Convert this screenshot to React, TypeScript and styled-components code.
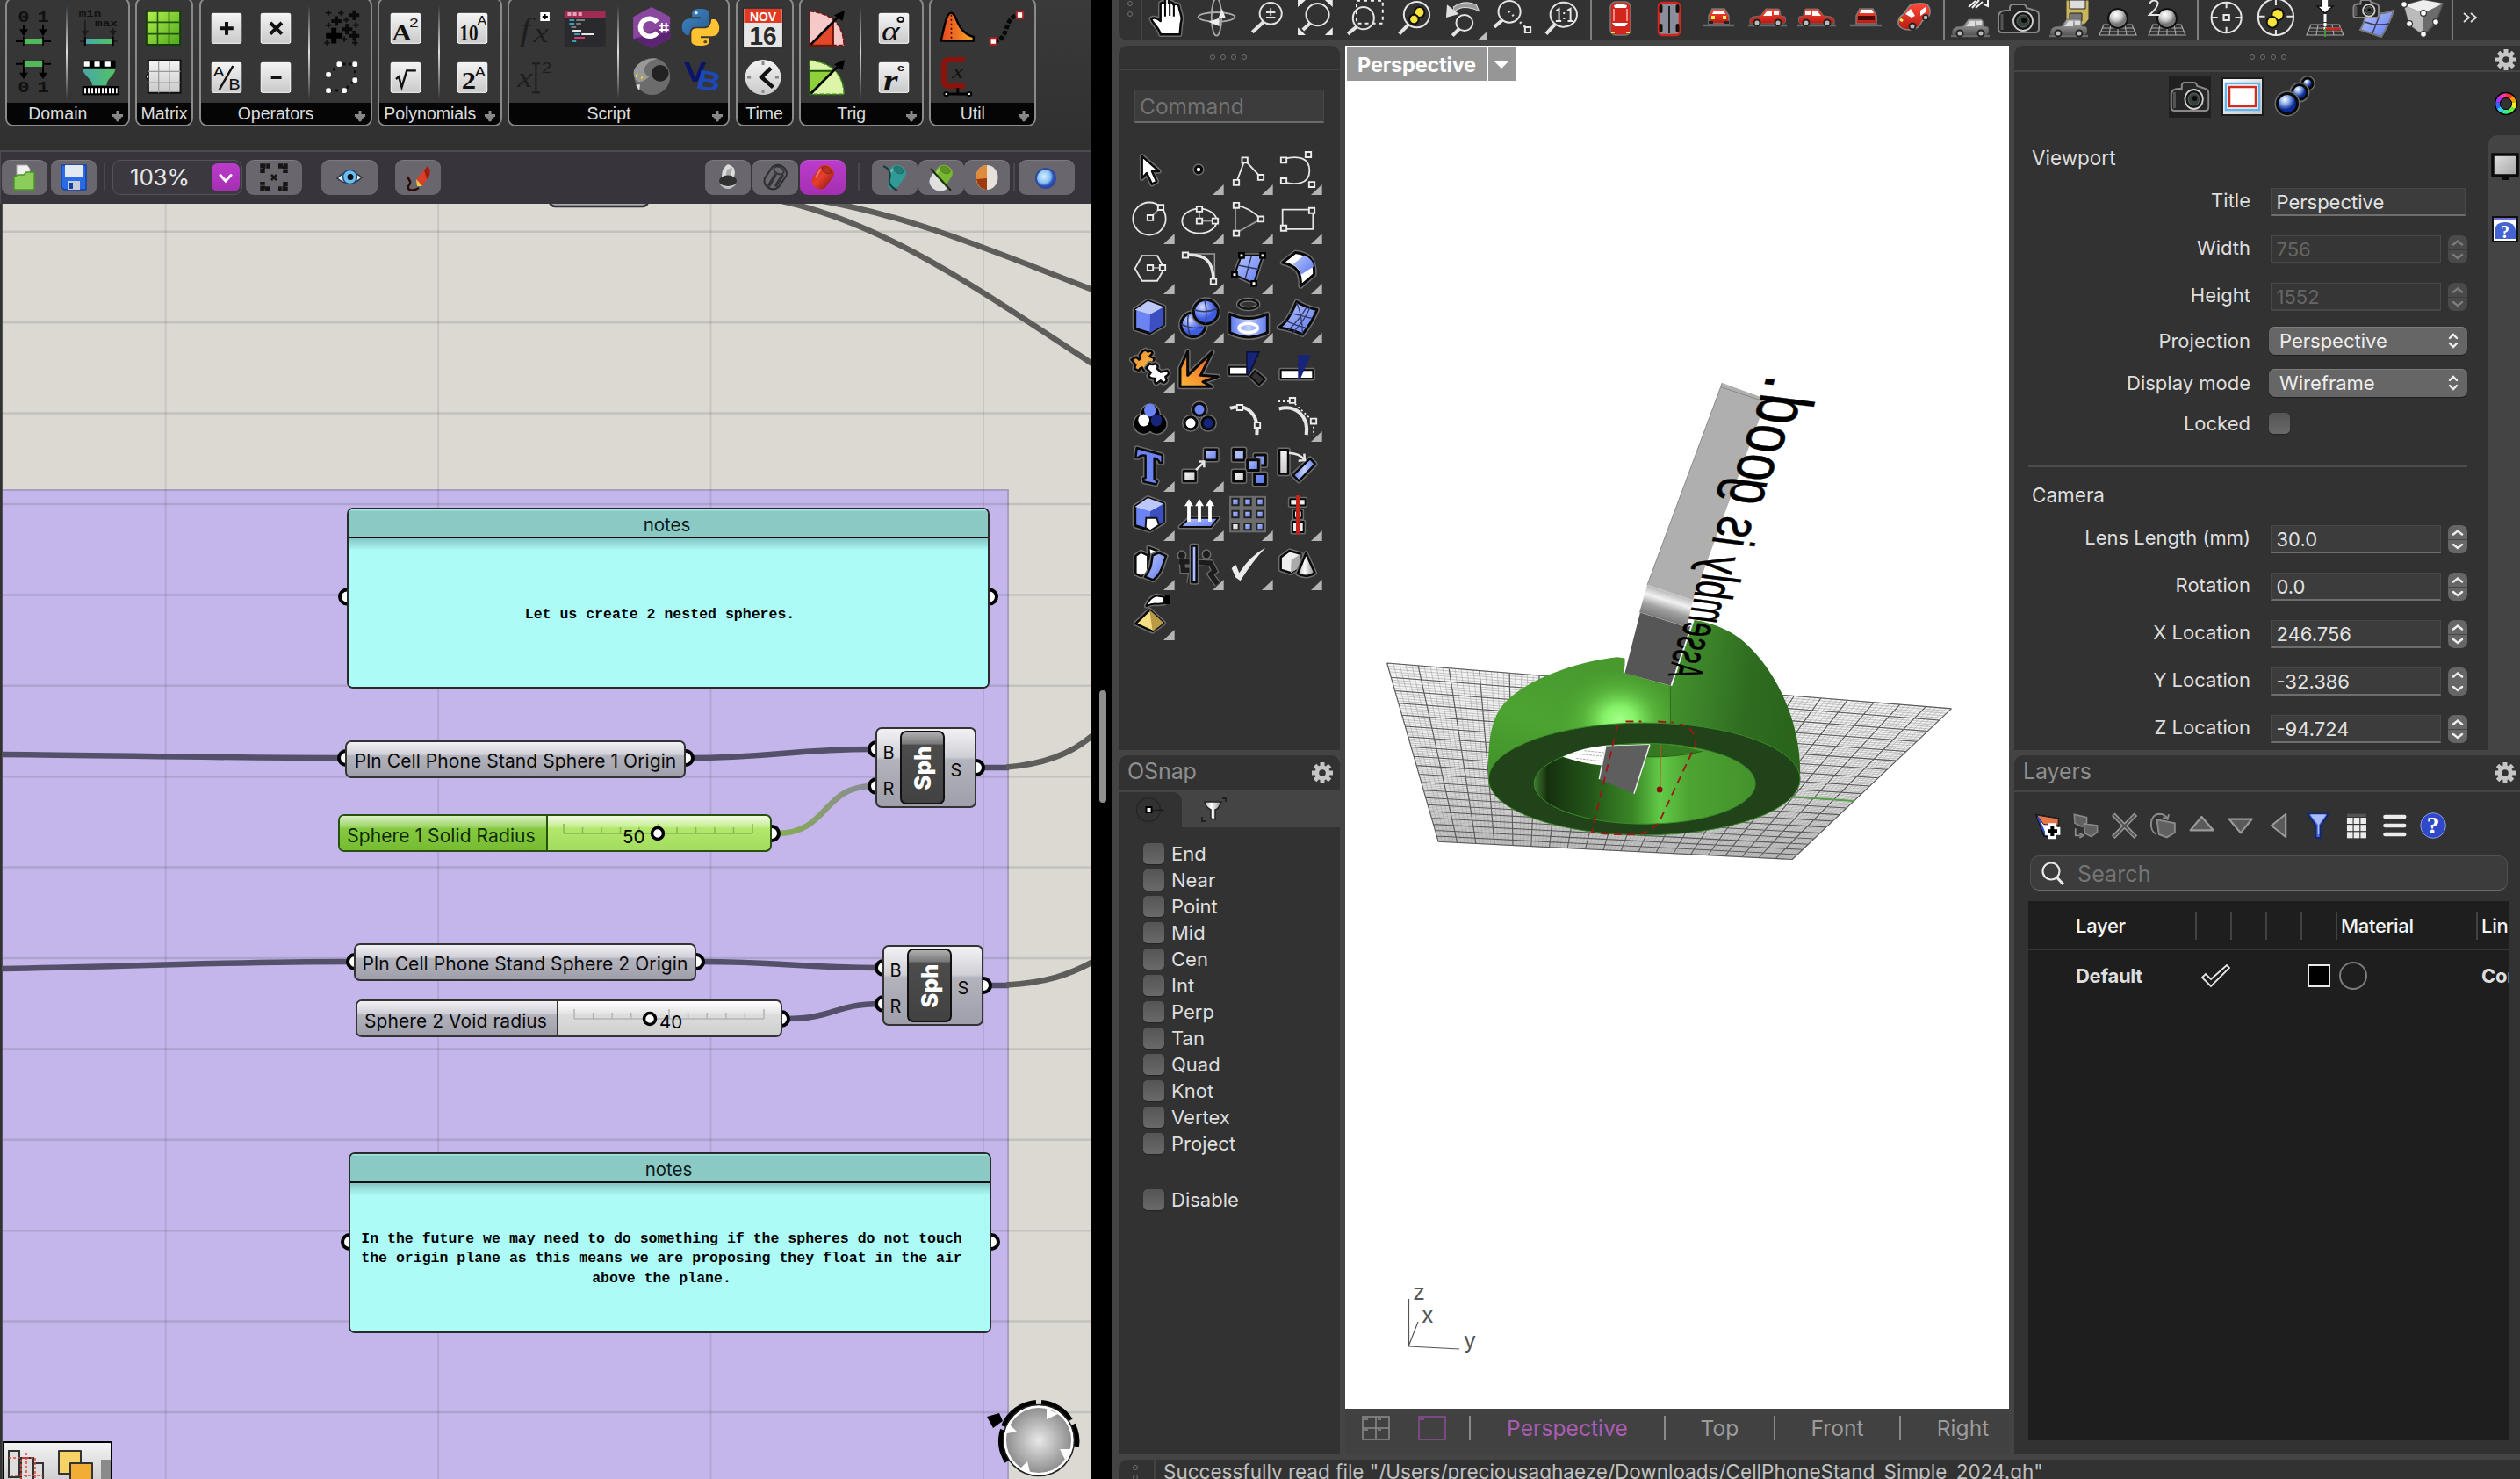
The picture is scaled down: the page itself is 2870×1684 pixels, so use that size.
import React from 'react';
import styled, { createGlobalStyle, css } from 'styled-components';

const ui = `Inter, "Liberation Sans", sans-serif`;
const arial = `"Liberation Sans", Arial, sans-serif`;

const Global = createGlobalStyle`
  * { box-sizing: border-box; }
  body { margin: 0; background: #000; overflow: hidden; font-family: ${ui}; }
  svg * { vector-effect: non-scaling-stroke; }
`;

const Screen = styled.div`
  width: 2870px; height: 1684px; display: flex; background: #000; overflow: hidden;
`;

/* ---------- shared drawing helpers ---------- */
const ArtSvg = styled.svg`display: block; width: 100%; height: 100%; overflow: hidden;`;
const Art = ({ box, children }: { box: string; children?: React.ReactNode }) => (
  <ArtSvg viewBox={box} preserveAspectRatio="none">{children}</ArtSvg>
);

const Out = ({ d, f, w = 3 }: { d: string; f: string; w?: number }) => (
  <g strokeLinejoin="round">
    <path d={d} fill="none" stroke="#6c6c6c" strokeWidth={w + 3} />
    <path d={d} fill={f} stroke="#0a0a0a" strokeWidth={w} />
  </g>
);
const Ring = ({ x, y, rx, ry, f }: { x: number; y: number; rx: number; ry: number; f: string }) => (
  <g>
    <ellipse cx={x} cy={y} rx={rx} ry={ry} fill="none" stroke="#6c6c6c" strokeWidth={6} />
    <ellipse cx={x} cy={y} rx={rx} ry={ry} fill={f} stroke="#0a0a0a" strokeWidth={3} />
  </g>
);
const Ln = ({ d, c = '#e6e6e6', w = 1.8, dash }: { d: string; c?: string; w?: number; dash?: string }) => (
  <path d={d} fill="none" stroke={c} strokeWidth={w} strokeDasharray={dash} />
);
const Pts = ({ p }: { p: number[][] }) => (
  <>{p.map(([x, y], i) => <rect key={i} x={x - 9.5} y={y - 8} width={19} height={16} fill="#323232" stroke="#ececec" strokeWidth={1.9} />)}</>
);
const Solid = ({ p }: { p: number[][] }) => (
  <>{p.map(([x, y], i) => <rect key={i} x={x - 8} y={y - 7} width={16} height={14} fill="#fff" stroke="#000" strokeWidth={2.4} />)}</>
);

const Defs = () => (
  <svg width="0" height="0" style={{ display: 'block', position: 'absolute' }}>
    <defs>
      <linearGradient id="blue" x1="0" y1="0" x2="1" y2="1"><stop offset="0" stopColor="#bcc8fa" /><stop offset="1" stopColor="#5b78f0" /></linearGradient>
      <linearGradient id="blueH"><stop offset="0" stopColor="#5b78f0" /><stop offset=".5" stopColor="#c3cffb" /><stop offset="1" stopColor="#5b78f0" /></linearGradient>
      <radialGradient id="ball" cx=".35" cy=".3"><stop offset="0" stopColor="#d9e0ff" /><stop offset=".5" stopColor="#8097f5" /><stop offset="1" stopColor="#3f5ce0" /></radialGradient>
      <radialGradient id="navy" cx=".38" cy=".3"><stop offset="0" stopColor="#fff" /><stop offset=".45" stopColor="#8fb2ea" /><stop offset="1" stopColor="#0c2a96" /></radialGradient>
      <radialGradient id="pearl" cx=".4" cy=".3"><stop offset="0" stopColor="#fff" /><stop offset=".6" stopColor="#ccc" /><stop offset="1" stopColor="#777" /></radialGradient>
      <linearGradient id="gray" x1="0" y1="0" x2="1" y2="1"><stop offset="0" stopColor="#fff" /><stop offset="1" stopColor="#c4c4c4" /></linearGradient>
      <linearGradient id="grayV" x1="0" y1="0" x2="0" y2="1"><stop offset="0" stopColor="#f4f4f4" /><stop offset="1" stopColor="#c9c9c9" /></linearGradient>
      <linearGradient id="lcd" x1="0" y1="0" x2="1" y2="1"><stop offset="0" stopColor="#e2e2e2" /><stop offset="1" stopColor="#a4a4a4" /></linearGradient>
      <linearGradient id="cone"><stop offset="0" stopColor="#aaa" /><stop offset=".4" stopColor="#fff" /><stop offset="1" stopColor="#8a8a8a" /></linearGradient>
      <linearGradient id="fire" x1="0" y1="1" x2="1" y2="0"><stop offset="0" stopColor="#f9b93a" /><stop offset="1" stopColor="#ef4f24" /></linearGradient>
      <linearGradient id="orange" x1="0" y1="0" x2="1" y2="1"><stop offset="0" stopColor="#ef8d2b" /><stop offset="1" stopColor="#f6bb4a" /></linearGradient>
      <linearGradient id="lime" x1="0" y1="0" x2="1" y2="1"><stop offset="0" stopColor="#b4f04c" /><stop offset="1" stopColor="#4fa81c" /></linearGradient>
      <linearGradient id="teal"><stop offset="0" stopColor="#46a8a8" /><stop offset="1" stopColor="#52c264" /></linearGradient>
      <linearGradient id="red" x1="0" y1="0" x2="1" y2="1"><stop offset="0" stopColor="#c01c14" /><stop offset=".45" stopColor="#e8402e" /><stop offset="1" stopColor="#7c0e08" /></linearGradient>
      <linearGradient id="redcar" x1="0" y1="0" x2="0" y2="1"><stop offset="0" stopColor="#ff4a38" /><stop offset="1" stopColor="#b81a12" /></linearGradient>
      <linearGradient id="graycar" x1="0" y1="0" x2="0" y2="1"><stop offset="0" stopColor="#b4b4b4" /><stop offset="1" stopColor="#5a5a5a" /></linearGradient>
      <linearGradient id="hump"><stop offset="0" stopColor="#e5431e" /><stop offset="1" stopColor="#f7a928" /></linearGradient>
      <linearGradient id="py1" x1="0" y1="0" x2="1" y2="1"><stop offset="0" stopColor="#3d86c6" /><stop offset="1" stopColor="#2a5c90" /></linearGradient>
      <linearGradient id="wire"><stop offset="0" stopColor="#86ad50" /><stop offset="1" stopColor="#8a8a9a" /></linearGradient>
      <linearGradient id="domeR" x1="0" y1="0" x2="1" y2="0.15"><stop offset="0" stopColor="#44942e" /><stop offset=".35" stopColor="#3a8028" /><stop offset=".65" stopColor="#2f6c20" /><stop offset="1" stopColor="#2a651b" /></linearGradient>
      <linearGradient id="domeL" x1="0" y1="1" x2=".5" y2="0"><stop offset="0" stopColor="#3f8f29" /><stop offset=".5" stopColor="#4da331" /><stop offset="1" stopColor="#48992e" /></linearGradient>
      <radialGradient id="glow" gradientUnits="userSpaceOnUse" cx="645" cy="1060" r="150"><stop offset="0" stopColor="#a4ff88" /><stop offset=".25" stopColor="#86f268" /><stop offset=".6" stopColor="#5fbf42" stopOpacity=".6" /><stop offset="1" stopColor="#4da331" stopOpacity="0" /></radialGradient>
      <linearGradient id="hole"><stop offset="0" stopColor="#3f7a30" /><stop offset=".06" stopColor="#16300f" /><stop offset=".25" stopColor="#235518" /><stop offset=".45" stopColor="#3b8827" /><stop offset=".57" stopColor="#62cb48" /><stop offset=".7" stopColor="#4da331" /><stop offset="1" stopColor="#43922c" /></linearGradient>
      <linearGradient id="bend" gradientUnits="userSpaceOnUse" x1="775" y1="690" x2="742" y2="780"><stop offset="0" stopColor="#a8a8a8" /><stop offset=".32" stopColor="#f2f2f2" /><stop offset=".6" stopColor="#a0a0a0" /><stop offset="1" stopColor="#6c6c6c" /></linearGradient>
      <linearGradient id="plane" x1="0" y1="0" x2="0" y2="1"><stop offset="0" stopColor="#f4f4f4" /><stop offset=".6" stopColor="#eee" /><stop offset="1" stopColor="#cfcfcf" /></linearGradient>
      <radialGradient id="dial"><stop offset="0" stopColor="#e8e8e8" /><stop offset="1" stopColor="#8c8c8c" /></radialGradient>
      <radialGradient id="sky" cx=".4" cy=".4"><stop offset="0" stopColor="#d4efff" /><stop offset=".7" stopColor="#86c0f4" /><stop offset="1" stopColor="#2b4fb4" /></radialGradient>
    </defs>
  </svg>
);

/* ---------- Grasshopper window ---------- */
const GhWindow = styled.div`
  width: 1243px; height: 1684px; display: flex; flex-direction: column; background: #323232; flex: none;
  border-right: 1px solid #5a5a5a;
`;
const Ribbon = styled.div`
  height: 171px; flex: none; display: flex; gap: 6.5px; padding-left: 6px; align-items: flex-start;
  background: linear-gradient(#3a3a3a, #303030);
`;
const Group = styled.div<{ $w: number }>`
  width: ${p => p.$w}px; height: 147px; margin-top: -3px; border: 2px solid #8a8a8a; border-radius: 9px;
  display: flex; flex-direction: column; overflow: hidden; background: #363636; flex: none;
`;
const GroupBody = styled.div`flex: 1; display: flex; padding: 5px 0 0 1.5px;`;
const IconCol = styled.div`width: 56px; display: flex; flex-direction: column; flex: none;`;
const RibbonCell = styled.div`width: 56px; height: 56px; flex: none;`;
const GroupSplit = styled.div`
  width: 2px; margin: 2px 9px 4px; flex: none;
  background: linear-gradient(#ddd0, #ddd 50%, #ddd0);
`;
const GroupLabel = styled.div`
  height: 25px; background: #050505; color: #dcdcdc; font: 19.5px ${arial};
  display: flex; align-items: center; flex: none;
`;
const GroupName = styled.span`flex: 1; text-align: center; line-height: 25px;`;
const GroupArrow = styled.span`width: 22px; height: 22px; flex: none;`;

const cell = (cx: number, row: number) => `${cx - 68.6} ${12 + 168 * row} 137.2 168`;
const Key = ({ x, y }: { x: number; y: number }) => (
  <rect x={x - 41} y={y - 51} width={82} height={102} rx={4} fill="url(#grayV)" stroke="#fff" strokeWidth={1} />
);
const T = ({ x, y, s, c = '#111', f = 'Liberation Sans', w, st, children }: any) => (
  <text x={x} y={y} fontSize={s} fill={c} fontFamily={`${f}, sans-serif`} fontWeight={w} fontStyle={st} textAnchor="middle">{children}</text>
);

const domain = [
  [[<Art key="a" box={cell(93, 0)}>
    <T x={66} y={76} s={54} w={700} f="Liberation Mono">0</T><T x={120} y={76} s={54} w={700} f="Liberation Mono">1</T>
    <path d="M66 84V120M120 84V120M44 141H142M66 125V155M120 125V155" stroke="#000" strokeWidth={2} />
    <path d="M54 100H78L66 124ZM108 100H132L120 124Z" /><rect x={68} y={132} width={50} height={18} fill="#52b85c" />
  </Art>, <Art key="b" box={cell(93, 1)}>
    <T x={66} y={316} s={54} w={700} f="Liberation Mono">0</T><T x={120} y={316} s={54} w={700} f="Liberation Mono">1</T>
    <path d="M66 205V262M120 205V262M44 218H142" stroke="#000" strokeWidth={2} />
    <path d="M54 248H78L66 270ZM108 248H132L120 270Z" /><rect x={68} y={210} width={50} height={18} fill="#52b85c" />
  </Art>]],
  [[<Art key="a" box={cell(280, 0)}>
    <T x={252} y={57} s={35} w={700} f="Liberation Mono">min</T><T x={297} y={89} s={35} w={700} f="Liberation Mono">max</T>
    <path d="M238 70V125M316 96V125M224 141H328" stroke="#1a1a1a" strokeWidth={1.6} /><path d="M228 104H248L238 124ZM306 104H326L316 124Z" fill="#1a1a1a" />
    <rect x={240} y={132} width={74} height={18} fill="url(#teal)" /><path d="M238 126V156M316 126V156" stroke="#000" strokeWidth={2} />
  </Art>, <Art key="b" box={cell(280, 1)}>
    <rect x={231} y={206} width={92} height={26} /><path d="M235 211H250V227H235ZM264 211H279V227H264ZM294 211H309V227H294Z" fill="#fff" />
    <path d="M231 236H323C318 262 298 268 298 292H258C258 268 236 262 231 236Z" fill="url(#teal)" />
    <rect x={230} y={294} width={104} height={31} /><path d="M236 309.500H328" stroke="#fff" strokeWidth={6} strokeDasharray="2 2" />
  </Art>]],
];
const matrix = [[[<Art key="a" box={cell(456, 0)}>
  <rect x={409} y={38} width={94} height={115} fill="url(#lime)" stroke="#143c08" strokeWidth={2} />
  <path d="M440 38V153M472 38V153M409 76H503M409 116H503" stroke="#1e5410" strokeWidth={1.6} />
</Art>, <Art key="b" box={cell(456, 1)}>
  <rect x={414} y={206} width={90} height={111} fill="url(#grayV)" stroke="#111" strokeWidth={2} />
  <path d="M443 206V317M473 206V317M414 244H504M414 282H504" stroke="#999" strokeWidth={1.2} /><path d="M413 252Q402 262 413 272" fill="#fff" stroke="#111" strokeWidth={1.5} />
</Art>]]];
const P = (x: number, y: number, r: number) => `M${x - r} ${y}H${x + r}M${x} ${y - r * 1.2}V${y + r * 1.2}`;
const operators = [
  [[<Art key="a" box={cell(632, 0)}><Key x={632} y={97} /><path d="M613 97H651M632 75V119" stroke="#111" strokeWidth={4} /></Art>,
    <Art key="b" box={cell(632, 1)}><Key x={632} y={265} /><T x={610} y={262} s={50} f="Liberation Mono">A</T><T x={654} y={306} s={54} f="Liberation Mono">B</T><path d="M650 225L612 306" stroke="#111" strokeWidth={2.5} /></Art>],
  [<Art key="a" box={cell(768, 0)}><Key x={768} y={97} /><path d="M753 78L785 116M785 78L753 116" stroke="#111" strokeWidth={4} /></Art>,
    <Art key="b" box={cell(768, 1)}><Key x={768} y={265} /><path d="M755 264H784" stroke="#111" strokeWidth={4} /></Art>]],
  [[<Art key="a" box={cell(957, 0)}><path d={P(933, 122, 22)} stroke="#000" strokeWidth={6} /><path d={P(990, 52, 14) + P(940, 72, 14) + P(970, 100, 15) + P(990, 122, 14)} stroke="#0a0a0a" strokeWidth={4} /><path d={P(918, 44, 8) + P(953, 44, 8) + P(968, 68, 8) + P(995, 86, 8) + P(918, 86, 8) + P(914, 146, 8) + P(962, 134, 8) + P(992, 146, 8)} stroke="#111" strokeWidth={2} /></Art>,
    <Art key="b" box={cell(957, 1)}><Ln d="M918 254L948 219H992V273L962 309H918" c="#0c0c0c" w={3} dash="3 4" />{[[948, 219], [992, 219], [918, 254], [992, 273], [962, 309], [918, 309]].map(([x, y]) => <rect key={x + y * 2} x={x - 7} y={y - 8} width={14} height={17} rx={5} fill="#fff" />)}</Art>]],
];
const poly = [
  [[<Art key="a" box={cell(1131, 0)}><Key x={1131} y={97} /><T x={1120} y={138} s={76} w={700} f="Liberation Serif">A</T><T x={1154} y={92} s={46} f="Liberation Mono">2</T></Art>,
    <Art key="b" box={cell(1131, 1)}><Key x={1131} y={265} /><Ln d="M1104 270L1112 262L1120 298L1134 241H1160" c="#111" w={2.4} /></Art>]],
  [[<Art key="a" box={cell(1318, 0)}><Key x={1318} y={97} /><T x={1308} y={137} s={74} w={700} f="Liberation Serif"><tspan textLength={52} lengthAdjust="spacingAndGlyphs">10</tspan></T><T x={1345} y={84} s={42} f="Liberation Mono">A</T></Art>,
    <Art key="b" box={cell(1318, 1)}><Key x={1318} y={265} /><T x={1308} y={304} s={80} w={700} f="Liberation Serif">2</T><T x={1340} y={260} s={48} f="Liberation Mono">A</T></Art>]],
];
const script = [
  [[<Art key="a" box={cell(1500, 0)}><T x={1472} y={134} s={110} c="#1e1e1e" st="italic" f="Liberation Serif">f</T><T x={1515} y={145} s={95} c="#1e1e1e" st="italic" f="Liberation Serif">x</T><rect x={1513} y={42} width={26} height={30} fill="#fff" /><path d="M1519 57H1534M1526 48V66" stroke="#000" strokeWidth={2} /></Art>,
    <Art key="b" box={cell(1500, 1)}><T x={1470} y={296} s={95} c="#1e1e1e" st="italic" f="Liberation Serif">x</T><Ln d="M1490 217H1512M1501 217V316M1490 316H1512" c="#1e1e1e" w={2} /><T x={1531} y={250} s={50} c="#1e1e1e">2</T></Art>],
  [<Art key="a" box={cell(112, 0)}><rect x={55} y={36} width={115} height={124} rx={6} fill="#2a2a2e" /><path d="M55 60V42Q55 36 62 36H162Q170 36 170 42V60Z" fill="#a02c54" /><path d="M64 42H74V54H64ZM79 42H89V54H79ZM94 42H104V54H94Z" fill="#e3a0b8" />
    <path d="M69 69H83M69 81H83M83 117H97M78 141H88" stroke="#38a0b4" strokeWidth={2} /><path d="M88 69H112M88 81H102M74 93H88" stroke="#7a7a7a" strokeWidth={2} /><path d="M78 105H102M103 117H137" stroke="#e8e8e8" strokeWidth={2} /><path d="M83 129H112" stroke="#d43c6c" strokeWidth={2} /></Art>]],
  [[<Art key="a" box={cell(296, 0)}><path d="M296 24L348 58V132L296 165L245 132V58Z" fill="#7b3a8e" /><path d="M245 132L348 110V132L296 165Z" fill="#5a2472" /><path d="M245 132V58L296 24L348 58V80Z" fill="#9350a8" opacity=".6" /><path d="M312 112A26 30 0 1 1 312 76" fill="none" stroke="#fff" strokeWidth={5.5} /><path d="M317 88H344M317 102H344M325 78V112M337 78V112" stroke="#fff" strokeWidth={2} /></Art>,
    <Art key="b" box={cell(296, 1)}><ellipse cx={298} cy={261} rx={50} ry={63} fill="#6c6c6c" /><ellipse cx={320} cy={250} rx={24} ry={28} fill="#222" /><path d="M246 250C248 215 285 198 312 200C270 215 268 250 290 262C270 285 250 290 246 250Z" fill="#999" /><path d="M250 258l8 -10l-2 22zM266 264l8 -4l-6 12z" fill="#f5d91f" /><path d="M252 290L262 310L264 288Z" fill="#ddd" /></Art>],
  [<Art key="a" box={cell(434, 0)}><path d="M410 55V42Q412 30 432 30Q458 30 458 46V76Q458 92 442 92H418Q404 92 402 120H394Q382 110 382 92Q382 66 402 64H434V58H410Z" fill="url(#py1)" /><path d="M458 132V144Q456 156 434 156Q408 156 408 142V112Q408 97 424 97H448Q462 95 464 66H474Q486 76 486 96Q486 122 466 124H434V130H458Z" fill="#ffc331" /><circle cx={421} cy={44} r={5} fill="#dfeeff" /><circle cx={447} cy={143} r={5} fill="#5a4a20" /></Art>,
    <Art key="b" box={cell(434, 1)}><T x={418} y={280} s={94} w={700} c="#0b1566">V</T><g transform="rotate(10 458 280)"><T x={456} y={308} s={92} w={700} c="#1c48b8">B</T></g></Art>]],
];
const time = [[[<Art key="a" box={cell(612, 0)}><rect x={557} y={28} width={110} height={136} fill="#e6e6e6" stroke="#222" strokeWidth={1} /><rect x={559} y={30} width={106} height={48} fill="#e23a22" /><T x={612} y={71} s={46} c="#fff" w={700}><tspan textLength={74} lengthAdjust="spacingAndGlyphs">NOV</tspan></T><T x={612} y={152} s={86} w={700} c="#2a2a2a"><tspan textLength={76} lengthAdjust="spacingAndGlyphs">16</tspan></T></Art>,
  <Art key="b" box={cell(612, 1)}><ellipse cx={612} cy={264} rx={50} ry={60} fill="url(#grayV)" /><path d="M612 210V222M612 306V318M568 264H578M646 264H656" stroke="#888" strokeWidth={3} /><path d="M634 232L608 264L640 298" fill="none" stroke="#111" strokeWidth={4.5} /></Art>]]];
const trig = [
  [[<Art key="a" box={cell(789, 0)}><path d="M740 38Q834 50 836 155L740 155Z" fill="#f6c9c9" stroke="#7c1010" strokeWidth={1.6} strokeDasharray="5 2" /><path d="M740 155L806 75V155Z" fill="#e2492a" stroke="#6e1608" strokeWidth={2} /><path d="M744 152L830 45" stroke="#000" strokeWidth={2.6} /><path d="M838 36L832 72L808 52Z" /></Art>,
    <Art key="b" box={cell(789, 1)}><path d="M740 206Q834 218 836 322L740 322Z" fill="#dcf5a8" stroke="#3a8c10" strokeWidth={1.6} strokeDasharray="5 2" /><path d="M740 242H806L740 322Z" fill="#8fd03a" stroke="#1c5410" strokeWidth={2} /><path d="M744 320L830 213" stroke="#000" strokeWidth={2.6} /><path d="M838 204L832 240L808 220Z" /></Art>]],
  [[<Art key="a" box={cell(975, 0)}><Key x={975} y={97} /><T x={966} y={138} s={96} st="italic" f="Liberation Serif">α</T><circle cx={994} cy={67} r={8} fill="none" stroke="#111" strokeWidth={2} /></Art>,
    <Art key="b" box={cell(975, 1)}><Key x={975} y={265} /><T x={966} y={308} s={104} w={700} st="italic" f="Liberation Serif">r</T><T x={994} y={244} s={34} w={700}>c</T></Art>]],
];
const util = [[
  [<Art key="a" box={cell(1150, 0)}><path d="M1105 140C1115 90 1120 44 1134 44C1150 44 1146 110 1196 126V140Z" fill="url(#hump)" stroke="#000" strokeWidth={2.4} /><Ln d="M1134 50V136" c="#400" w={1.6} dash="2 3" /></Art>,
    <Art key="b" box={cell(1150, 1)}><path d="M1172 204H1128Q1113 204 1113 222V276Q1113 294 1128 294H1172" fill="none" stroke="#8c120c" strokeWidth={6} /><T x={1152} y={268} s={70} st="italic" f="Liberation Serif">x</T><path d="M1120 321H1184M1152 300V321" stroke="#000" strokeWidth={3} /><circle cx={1120} cy={321} r={6} fill="#fff" stroke="#000" strokeWidth={2} /><circle cx={1184} cy={321} r={6} fill="#fff" stroke="#000" strokeWidth={2} /></Art>],
  [<Art key="a" box={cell(1288, 0)}><path d="M1254 140C1300 138 1278 54 1324 52" fill="none" stroke="#080808" strokeWidth={5} strokeDasharray="5 2" /><rect x={1243} y={130} width={18} height={22} fill="#fff" stroke="#b02020" strokeWidth={2} /><rect x={1317} y={40} width={18} height={22} fill="#fff" stroke="#b02020" strokeWidth={2} /></Art>, null],
]];
const groups = [
  { name: 'Domain', w: 141.5, arrow: true, segs: domain }, { name: 'Matrix', w: 66, segs: matrix },
  { name: 'Operators', w: 197, arrow: true, segs: operators }, { name: 'Polynomials', w: 141.5, arrow: true, segs: poly },
  { name: 'Script', w: 253, arrow: true, segs: script }, { name: 'Time', w: 66, segs: time },
  { name: 'Trig', w: 141.5, arrow: true, segs: trig }, { name: 'Util', w: 121.5, arrow: true, segs: util },
];

const GhBar = styled.div`
  height: 61px; flex: none; border-top: 2px solid #4b4b50; background: #37353b; display: flex; align-items: center; padding: 0 18px 1.5px 2px;
  border-left: 1px solid #4b4b50;
`;
const GhBtn = styled.div<{ $w?: number; $ml?: number; $on?: boolean }>`
  width: ${p => p.$w ?? 52}px; height: 40px; margin-left: ${p => p.$ml ?? 0}px; border-radius: 9px; flex: none;
  background: ${p => (p.$on ? 'linear-gradient(#bb3ccb,#a42fb2)' : '#69676d')}; box-shadow: inset 0 1px 0 #ffffff22;
  display: flex; align-items: center; justify-content: center;
`;
const GhIcon = styled.div`width: 34px; height: 34px;`;
const GhSep = styled.div<{ $ml: number }>`width: 2px; height: 32px; background: #4a484e; margin-left: ${p => p.$ml}px; flex: none;`;
const Zoom = styled.div`
  width: 148px; height: 40px; margin-left: 8px; border: 1.5px solid #55535a; border-radius: 9px; background: #3b393f; flex: none;
  display: flex; align-items: center; justify-content: space-between; padding: 0 2.5px 0 19px; color: #e6e6e6; font-size: 26px; letter-spacing: -0.2px;
`;
const ZoomDrop = styled.div`
  width: 32px; height: 32px; border-radius: 7px; background: linear-gradient(#bb3ccb,#a42fb2); display: flex; align-items: center; justify-content: center;
`;
const Grow = styled.div`flex: 1;`;

const capPath = 'M14 4.500Q20 1 26 5Q31 9 29.500 15L21 27.500Q16 32.500 9.500 29Q3 25 5 18Z';
const capsule = (f: string, extra?: React.ReactNode) => <Art box="0 0 34 34"><path d={capPath} fill={f} /><ellipse cx={21.500} cy={8.500} rx={6} ry={3.800} transform="rotate(25 21.5 8.500)" fill="#0003" stroke="#0003" strokeWidth={1} /><path d="M9 17L15 7" stroke="#fff5" strokeWidth={2} />{extra}</Art>;

/* Canvas */
const Canvas = styled.div`
  flex: 1; margin-left: 2px; border-left: 1px solid #55535a; background: #dcd9d3; position: relative; overflow: hidden;
`;
const World = styled.div`position: absolute; left: -3px; top: -232px; width: 1243px; height: 1684px; overflow: hidden;`;
const at = css<{ $x: number; $y: number; $w: number; $h: number }>`
  position: absolute; left: ${p => p.$x}px; top: ${p => p.$y}px; width: ${p => p.$w}px; height: ${p => p.$h}px;
`;
const Region = styled.div`${at} background: #c4b6ea; border: 2px solid #a79cc4;`;
const Wires = styled.svg`position: absolute; inset: 0; width: 1243px; height: 1684px;`;
const Note = styled.div`
  ${at} border: 2px solid #2a2a2a; border-radius: 7px; background: #adfbf7; display: flex; flex-direction: column; overflow: hidden;
`;
const NoteHead = styled.div`
  height: 33px; flex: none; background: #8bc9c5; border-bottom: 2.5px solid #111; font-size: 20.5px; line-height: 35.5px; text-align: center; color: #0c1a1a;
  box-shadow: inset 0 1.5px 0 #a6e6e2; padding-right: 3px;
`;
const NoteBody = styled.div<{ $shift: number }>`
  flex: 1; display: flex; align-items: center; justify-content: center; text-align: center; padding: ${p => p.$shift}px 19px 0 0;
  background: linear-gradient(#84c6c3, #adfbf7 14px); color: #000; white-space: pre;
  font: bold 16.55px/22.6px "Liberation Mono", monospace;
`;
const silver = 'linear-gradient(#f2f2f5 0, #cfcfd6 36%, #b3b3bd 40%, #9f9fab 100%)';
const Param = styled.div`
  ${at} border: 2px solid #333; border-radius: 7px; background: ${silver}; display: flex; align-items: center; justify-content: center;
  font-size: 21px; color: #0a0a0a; white-space: nowrap; padding-top: 4px; letter-spacing: 0.08px;
`;
const Slider = styled.div<{ $green?: boolean }>`
  ${at} border: 2px solid ${p => (p.$green ? '#27510f' : '#333')}; border-radius: 7px; display: flex; overflow: hidden;
  background: ${p => (p.$green ? 'linear-gradient(#f0fbe2 0,#c9ee97 30%,#b3e86c 36%,#a3dc5e)' : 'linear-gradient(#fff 0,#e6e6e6 34%,#dcdcdc 40%,#cfcfcf)')};
`;
const SliderName = styled.div<{ $w: number; $green?: boolean }>`
  width: ${p => p.$w}px; border-right: 2px solid ${p => (p.$green ? '#27510f' : '#333')}; display: flex; align-items: center; justify-content: center;
  padding: 5px 3px 0 0; font-size: 21px; letter-spacing: 0.08px; color: ${p => (p.$green ? '#0f2a06' : '#0a0a0a')}; white-space: nowrap; flex: none;
  background: ${p => (p.$green ? 'linear-gradient(#d8f0c0 0,#a0d66e 30%,#84c93e 38%,#76bb32)' : silver)};
`;
const SliderTrack = styled.div`flex: 1;`;
const Comp = styled.div`
  ${at} border: 2px solid #333; border-radius: 7px; background: ${silver}; display: flex; align-items: stretch; font-size: 20px; color: #0a0a0a;
`;
const Ports = styled.div`
  width: 26px; display: flex; flex-direction: column; justify-content: space-around; align-items: center; padding-top: 6px; text-align: center;
`;
const Core = styled.div`
  width: 51px; margin: 2px 0; border: 2px solid #111; border-radius: 7px; display: flex; align-items: center; justify-content: center;
  background: linear-gradient(#b0b0b0 0, #787878 16%, #4c4c4c 18%, #424242); flex: none;
`;
const CoreText = styled.span`color: #fff; font-weight: 800; font-size: 26px; transform: rotate(-90deg);`;

const Grip = ({ x, y }: { x: number; y: number }) => <circle cx={x} cy={y} r={8} fill="#fff" stroke="#000" strokeWidth={4} />;
const gx = [188.7, 499.1, 809.5, 1120];
const gy = Array.from({ length: 14 }, (_, i) => 263.800 + i * 103.400);

const Ticks = ({ x, w, y, knob, c }: { x: number; w: number; y: number; knob: number; c: string }) => (
  <g>
    <path d={`M${x} ${y}H${x + w}` + Array.from({ length: 11 }, (_, i) => `M${x + (w * i) / 10} ${y}v${i % 5 ? -7 : -11}`).join('')} stroke={c} strokeWidth={1.5} fill="none" />
    <circle cx={knob} cy={y} r={6.500} fill="#fff" stroke="#000" strokeWidth={3.500} />
  </g>
);

const Grasshopper = () => (
  <GhWindow>
    <Ribbon>
      {groups.map(g => (
        <Group key={g.name} $w={g.w}>
          <GroupBody>
            {g.segs.map((seg: any, i: number) => (
              <React.Fragment key={i}>
                {i > 0 && <GroupSplit />}
                {seg.map((col: any, j: number) => <IconCol key={j}>{col.map((c: any, k: number) => <RibbonCell key={k}>{c}</RibbonCell>)}</IconCol>)}
              </React.Fragment>
            ))}
          </GroupBody>
          <GroupLabel>
            <GroupName>{g.name}</GroupName>
            {g.arrow && <GroupArrow><Art box="0 0 22 22"><path d="M10 7V19M4 12.500H16" fill="none" stroke="#8a8a8a" strokeWidth={3} /><path d="M4 12.500H16L10 20Z" fill="#858585" /></Art></GroupArrow>}
          </GroupLabel>
        </Group>
      ))}
    </Ribbon>
    <GhBar>
      <GhBtn $ml={-1}><GhIcon><Art box="0 0 34 34"><path d="M8 3H20L23 7V20H8Z" fill="#f0f0f0" stroke="#aaa" strokeWidth={1} /><path d="M5 16L10 14H16L19 11H28V31H5Z" fill="#8ccc5a" stroke="#4c9428" strokeWidth={1.500} /></Art></GhIcon></GhBtn>
      <GhBtn $ml={4}><GhIcon><Art box="0 0 34 34"><path d="M3 3H31V31H6L3 28Z" fill="#2a6ae4" stroke="#1542a8" strokeWidth={1.500} /><rect x={7} y={3} width={20} height={14} fill="#e4e8f0" /><rect x={10} y={21} width={14} height={10} fill="#c8ccd8" /><rect x={12} y={23} width={4} height={7} fill="#1542a8" /></Art></GhIcon></GhBtn>
      <GhSep $ml={8} />
      <Zoom><span>103%</span><ZoomDrop><Art box="0 0 32 32"><path d="M10 13.500L16 20L22 13.500" fill="none" stroke="#fff" strokeWidth={3} strokeLinecap="round" /></Art></ZoomDrop></Zoom>
      <GhBtn $w={64} $ml={4}><GhIcon><Art box="0 0 34 34"><path d="M4 12V4H12M22 4H30V12M30 22V30H22M12 30H4V22" fill="none" stroke="#161616" strokeWidth={5.500} strokeDasharray="5.500 .6" /><path d="M14 14L20 20M20 14L14 20" stroke="#161616" strokeWidth={2.500} /></Art></GhIcon></GhBtn>
      <GhBtn $w={64} $ml={22}><GhIcon><Art box="0 0 34 34"><path d="M3 18Q16 4 31 17Q18 30 3 18Z" fill="#eef6fa" stroke="#2a3038" strokeWidth={1.500} /><circle cx={17.500} cy={16.500} r={8} fill="#6cbef0" stroke="#1c4a70" strokeWidth={1.500} /><circle cx={18} cy={16.500} r={3.500} fill="#081018" /></Art></GhIcon></GhBtn>
      <GhBtn $ml={20}><GhIcon><Art box="0 0 34 34"><path d="M15 19L28 4Q32 9 30 15L22 27Z" fill="#d8402a" /><path d="M24 9L28 4Q32 9 30 15L27 19Z" fill="#a01c10" /><path d="M15 19L22 27L16 27Z" fill="#f0c850" /><path d="M5 16C8 22 10 22 6 27C4 32 12 33 18 29" fill="none" stroke="#2c0a06" strokeWidth={2.500} /></Art></GhIcon></GhBtn>
      <Grow />
      <GhBtn><GhIcon><Art box="0 0 34 34"><path d="M10 16Q10 6 17 2Q25 4 25 12L23 20H9Z" fill="#dcdcdc" /><path d="M16 8L22 6L20 16L14 18Z" fill="#aaa" /><ellipse cx={17} cy={21} rx={10} ry={6.500} fill="#303030" /><path d="M7 24Q17 36 27 24Q17 30 7 24Z" fill="#c4c4c4" /></Art></GhIcon></GhBtn>
      <GhBtn $ml={2}><GhIcon><Art box="0 0 34 34"><path d={capPath} fill="#69676d" stroke="#2e2e30" strokeWidth={2} /><path d="M17 14L10 26M25 15L18 26" stroke="#343436" strokeWidth={3.500} strokeLinecap="round" /><ellipse cx={21} cy={9} rx={6} ry={4} fill="none" stroke="#343436" strokeWidth={1.800} transform="rotate(25 21 9)" /></Art></GhIcon></GhBtn>
      <GhBtn $ml={2} $on><GhIcon>{capsule('url(#red)')}</GhIcon></GhBtn>
      <GhSep $ml={14} />
      <GhBtn $ml={14}><GhIcon>{capsule('#2f9a96', <><path d="M1 5Q14 8 10 20Q8 28 12 33L1 30Z" fill="#69676d" /><path d="M4 4Q14 8 11 19Q9 26 20 32" fill="none" stroke="#173c3c" strokeWidth={2} /></>)}</GhIcon></GhBtn>
      <GhBtn $ml={1}><GhIcon>{capsule('#78b830', <><path d="M8 12L24 30Q14 36 6 28Q0 22 8 12Z" fill="#e0e0e0" /><path d="M5 7L28 32" stroke="#1c2c10" strokeWidth={2} /></>)}</GhIcon></GhBtn>
      <GhBtn><GhIcon><Art box="0 0 34 34"><ellipse cx={17} cy={17} rx={12.500} ry={14} fill="#e6e2da" /><path d="M17 3A12.500 14 0 0 0 17 31Z" fill="#e08a3c" /><path d="M17 18V31A12.500 14 0 0 1 5 19Z" fill="#9c3a10" /></Art></GhIcon></GhBtn>
      <GhSep $ml={4} />
      <GhBtn $w={64} $ml={4}><GhIcon><Art box="0 0 34 34"><ellipse cx={16} cy={18} rx={11} ry={11} fill="url(#sky)" stroke="#2f4a9c" strokeWidth={2} /></Art></GhIcon></GhBtn>
    </GhBar>
    <Canvas>
      <World>
        <Region $x={0} $y={557} $w={1149} $h={1200} />
        <Wires>
          {gx.map(x => <line key={x} x1={x} x2={x} y1={232} y2={1684} stroke="#00000016" strokeWidth={2} />)}
          {gy.map(y => <line key={y} x1={3} x2={1243} y1={y} y2={y} stroke="#0000001c" strokeWidth={2.500} />)}
          <rect x={626} y={200} width={112} height={35} rx={6} fill="#a9a9b5" stroke="#333" strokeWidth={2.500} />
          <g fill="none" stroke="#54506a" strokeWidth={6.500}>
            <path d="M0 859C130 860 250 863 388 863" /><path d="M785 863C880 863 900 853 995 853" />
            <path d="M0 1103C130 1101 250 1095 398 1095" /><path d="M797 1095C890 1095 910 1102 1003 1102" />
            <path d="M895 1160C950 1160 950 1143 1003 1143" /><path d="M1114 874H1149" /><path d="M1124 1122H1149" />
            <path d="M884 949C945 949 935 895 995 895" stroke="url(#wire)" />
          </g>
          <g fill="none" stroke="#5f5d5b" strokeWidth={6.500}>
            <path d="M1146 873.500C1180 871 1220 862 1250 832" /><path d="M1146 1121.500C1190 1119 1220 1110 1250 1092" />
            <path d="M876 226C1006 250 1122 335 1250 418" /><path d="M920 226C1035 244 1130 286 1250 332" />
          </g>
          {[[395, 679.500], [1127, 679.500], [398, 1414], [1129, 1414], [394, 863], [781, 863], [879, 949], [998, 853], [998, 895], [1112, 874], [404, 1095], [793, 1095], [890, 1160], [1006, 1102], [1006, 1143], [1120, 1122]].map(([x, y], i) => <Grip key={i} x={x} y={y} />)}
          <g>
            <path d="M1147 1664A43 43 0 0 1 1142 1628M1143 1624A43 43 0 0 1 1180 1597M1186 1597A43 43 0 0 1 1219 1617M1222 1622A43 43 0 0 1 1226 1647" fill="none" stroke="#000" strokeWidth={6} />
            <path d="M1124 1613L1138 1609L1142 1618L1131 1626Z" />
            <circle cx={1183} cy={1640} r={38.500} fill="url(#dial)" stroke="#fff" strokeWidth={3} /><circle cx={1183} cy={1640} r={40.500} fill="none" stroke="#222" strokeWidth={1.500} />
            <path d="M1192 1604L1205 1610L1192 1616ZM1148 1620L1158 1630L1147 1632ZM1207 1650L1220 1650L1213 1662ZM1170 1664L1162 1672L1173 1676Z" fill="#fff" />
          </g>
          <rect x={3} y={1642} width={124} height={50} fill="url(#grayV)" stroke="#000" strokeWidth={2} /><rect x={115} y={1662} width={11} height={30} fill="#8a8a8a" />
          <g stroke="#333" strokeWidth={2}><path d="M10 1652H22V1682H10ZM24 1660H38V1690H24ZM38 1666H49V1690H38Z" fill="#ddd" /><path d="M67 1652H92V1678H67Z" fill="#f7d264" strokeLinejoin="round" /><path d="M80 1666H105V1692H80Z" fill="#f2ae34" strokeLinejoin="round" /></g>
          <path d="M10 1660H38M12 1680H49M30 1654V1690M24 1662V1690M40 1660V1690" stroke="#e04434" strokeWidth={1.500} strokeDasharray="3 2" />
        </Wires>
        <Note $x={395} $y={578} $w={732} $h={206}><NoteHead>notes</NoteHead><NoteBody $shift={5}>Let us create 2 nested spheres.</NoteBody></Note>
        <Note $x={397} $y={1312} $w={732} $h={206}><NoteHead>notes</NoteHead><NoteBody $shift={4}>{'In the future we may need to do something if the spheres do not touch\nthe origin plane as this means we are proposing they float in the air\nabove the plane.'}</NoteBody></Note>
        <Param $x={393} $y={843} $w={388} $h={43}>Pln Cell Phone Stand Sphere 1 Origin</Param>
        <Param $x={403} $y={1074} $w={390} $h={43}>Pln Cell Phone Stand Sphere 2 Origin</Param>
        <Slider $x={384.500} $y={927} $w={494} $h={43} $green><SliderName $w={237} $green>Sphere 1 Solid Radius</SliderName><SliderTrack /></Slider>
        <Slider $x={405} $y={1138} $w={486} $h={43}><SliderName $w={229}>Sphere 2 Void radius</SliderName><SliderTrack /></Slider>
        <Wires>
          <Ticks x={642} w={215} y={949} knob={749} c="#87b558" /><Ticks x={654} w={216} y={1160} knob={740} c="#b4b4b4" />
          <text x={709} y={959.500} fontSize={20.500} fontFamily={ui}>50</text><text x={751} y={1170.500} fontSize={20.500} fontFamily={ui}>40</text>
        </Wires>
        <Comp $x={997} $y={828} $w={115} $h={92}><Ports><span>B</span><span>R</span></Ports><Core><CoreText>Sph</CoreText></Core><Ports><span>S</span></Ports></Comp>
        <Comp $x={1005} $y={1076} $w={115} $h={92}><Ports><span>B</span><span>R</span></Ports><Core><CoreText>Sph</CoreText></Core><Ports><span>S</span></Ports></Comp>
      </World>
    </Canvas>
  </GhWindow>
);

const Gap = styled.div`width: 24px; display: flex; align-items: center; justify-content: center; flex: none; border-right: 1px solid #333; padding: 16px 0 0 2px;`;
const GapHandle = styled.div`width: 8px; height: 128px; border-radius: 4px; background: #8f8f8f;`;

/* ---------- Rhino window ---------- */
const Rhino = styled.div`flex: 1; height: 1684px; background: #444; display: flex; flex-direction: column; padding-left: 7px; min-width: 0;`;
const TopBar = styled.div`
  height: 46px; flex: none; background: #323232; border-bottom-left-radius: 10px; display: flex; align-items: stretch;
`;
const DragCol = styled.div`width: 27px; border-right: 2px solid #444; display: flex; flex-direction: column; align-items: center; gap: 6px; padding-top: 1px; flex: none; overflow: hidden;`;
const Dot = styled.i`width: 6px; height: 6px; border-radius: 50%; border: 1.8px solid #707070; flex: none;`;
const TopCell = styled.div`width: 56px; height: 46px; flex: none;`;
const TopSep = styled.div<{ $l: number; $r: number }>`width: 2px; margin: 0 ${p => p.$r}px 0 ${p => p.$l}px; background: #7e7e7e; flex: none;`;
const More = styled.div`width: 40px; height: 46px;`;

const Mag = ({ x, y, rx = 35, ry = 44, hx, hy }: { x: number; y: number; rx?: number; ry?: number; hx?: number; hy?: number }) => (
  <g><ellipse cx={x} cy={y} rx={rx} ry={ry} fill="none" stroke="#e4e4e4" strokeWidth={2} /><path d={`M${x - rx * .65} ${y + ry * .78}L${hx ?? x - rx - 2} ${hy ?? y + ry + 24}`} stroke="#e4e4e4" strokeWidth={4} /></g>
);
const bx = (i: number) => `${78.4 + 107.1 * i} 0 107.1 138`;
const b5 = (i: number) => `${867.500 + 108.4 * i} 0 108.4 138`;
const Car = ({ f = 'url(#redcar)', glass = '#fff' }: { f?: string; glass?: string }) => (
  <g><path d="M6 29H50" stroke="#6a6a6a" strokeWidth={2.500} />
    <path d="M8 27Q7 20 12 19L20 18L26 10H40Q43 10 43 18L48 19Q50 26 46 27Z" fill={f} stroke="#6a6a6a" strokeWidth={1} />
    <path d="M23 18L28 12H33V18ZM35 12H41V17H35Z" fill={glass} /><circle cx={16} cy={26} r={3.500} fill="#bbb" stroke="#222" strokeWidth={2} /><circle cx={40} cy={26} r={3.500} fill="#bbb" stroke="#222" strokeWidth={2} /></g>
);
const Camera = () => (
  <g><path d="M13 12H17V8Q18 5 20 5H32Q35 5 36 9L46 12Q50 13 50 17V33Q50 37 46 37H8Q4 37 4 33V18Q5 12 13 12Z" fill="#262626" stroke="#888" strokeWidth={2} />
    <circle cx={32} cy={24} r={11} fill="#151515" stroke="#d0d0d0" strokeWidth={1.800} /><circle cx={32} cy={24} r={7} fill="#344238" stroke="#666" strokeWidth={1} /><circle cx={33} cy={23} r={3} fill="#0a0a0a" /><path d="M8 16V34" stroke="#555" strokeWidth={3} /></g>
);
const Floor = ({ x = 0 }: { x?: number }) => <path d={`M${x + 12} 28H${x + 44}L${x + 49} 40H${x + 7}ZM${x + 10} 32H${x + 46}M${x + 9} 36H${x + 47}M${x + 20} 28L${x + 18} 40M${x + 28} 28V40M${x + 36} 28L${x + 38} 40`} fill="none" stroke="#a8a8a8" strokeWidth={1.200} />;
const L = '0 0 56 46';

const viewTools = [
  <Art box={bx(0)}><Out f="#fff" w={2.500} d="M118 118C116 96 98 76 98 64Q106 56 118 72V12Q122 4 128 12V-10H136V10Q142 4 146 12V16Q156 10 158 22C160 50 168 56 162 80L160 118Z" /><path d="M128 12V56M138 10V54M147 14V56" stroke="#000" strokeWidth={2} /></Art>,
  <Art box={bx(1)}><ellipse cx={240} cy={58} rx={11} ry={64} fill="none" stroke="#aaa" strokeWidth={1.800} /><ellipse cx={240} cy={58} rx={40} ry={16} fill="none" stroke="#aaa" strokeWidth={1.800} /><path d="M252 30L260 62H244ZM222 74L246 62V90Z" fill="#eee" /></Art>,
  <Art box={bx(2)}><Mag x={358} y={46} rx={24} ry={37} hx={318} hy={110} /><path d="M348 42H368M358 28V54M348 60H368" stroke="#e4e4e4" strokeWidth={1.800} /></Art>,
  <Art box={bx(3)}><Mag x={460} y={50} rx={25} ry={38} hx={428} hy={102} /><path d="M417 0H434L417 24ZM493 0H476L493 24ZM417 120V94L434 120ZM493 120V94L476 120Z" fill="#ececec" /></Art>,
  <Art box={bx(4)}><rect x={545} y={2} width={57} height={78} fill="none" stroke="#eee" strokeWidth={2} strokeDasharray="4 4" /><Mag x={560} y={62} rx={23} ry={38} hx={526} hy={116} /></Art>,
  <Art box={bx(5)}><Mag x={676} y={50} rx={28} ry={44} hx={638} hy={116} /><ellipse cx={682} cy={42} rx={11} ry={18} fill="#f7e43c" stroke="#111" strokeWidth={2} /><ellipse cx={670} cy={66} rx={10} ry={16} fill="#f7e43c" stroke="#111" strokeWidth={2} /></Art>,
  <Art box={bx(6)}><path d="M758 40Q776 12 812 38L806 16Q780 -2 756 24Z" fill="#9a9a9a" stroke="#ddd" strokeWidth={1} /><path d="M740 60L742 16L768 48Z" fill="#e0e0e0" /><Mag x={780} y={78} rx={18} ry={27} hx={754} hy={122} /><path d="M808 138L829 108V138Z" fill="#bdbdbd" /></Art>,
  <Art box={bx(7)}><Mag x={878} y={40} rx={24} ry={37} hx={845} hy={92} /><path d="M876 38L912 92" stroke="#ddd" strokeWidth={2.500} strokeDasharray="2 4" /><rect x={912} y={93} width={12} height={18} fill="none" stroke="#e8e8e8" strokeWidth={2} /></Art>,
  <Art box={bx(8)}><Mag x={996} y={50} rx={29} ry={42} hx={958} hy={116} /><path d="M980 36L986 30V72M1004 36L1011 30V72M979 72H991M1005 72H1017M997 42V48M997 60V66" stroke="#e8e8e8" strokeWidth={2} fill="none" /></Art>,
];
const carTools = [
  <Art box={L}><rect x={17} y={2} width={23} height={38} rx={6} fill="#d2251c" stroke="#777" strokeWidth={1.500} /><path d="M21 6Q28 3 36 6L35 9H22ZM19 26L37 26L34 30H22Z" fill="#fff" /><path d="M21 10V24M36 10V24" stroke="#f4b0a8" strokeWidth={1.500} /><path d="M18 36H22V38H18ZM35 36H39V38H35Z" fill="#fd4" /></Art>,
  <Art box={L}><rect x={16} y={3} width={24} height={37} rx={4} fill="#8a8d9a" stroke="#d2251c" strokeWidth={2.500} /><path d="M28 7V38" stroke="#222" strokeWidth={2} /><path d="M18.500 7V13M37.500 7V13M18.500 29V35M37.500 29V35" stroke="#111" strokeWidth={4} strokeLinecap="round" /></Art>,
  <Art box={L}><path d="M10 29H46" stroke="#6a6a6a" strokeWidth={2.500} /><path d="M17 27V18L21 10H35L40 18V27Z" fill="url(#redcar)" stroke="#777" strokeWidth={1.500} /><path d="M21 16L23 12H34L36 16Z" fill="#fff" /><path d="M20 18H24V22H20ZM33 18H37V22H33Z" fill="#fe5" /><path d="M17 24H22V27H17ZM35 24H40V27H35Z" fill="#222" /></Art>,
  <Art box={L}><Car /></Art>,
  <Art box={L}><g transform="translate(56 0) scale(-1 1)"><Car /></g></Art>,
  <Art box={L}><path d="M10 29H46" stroke="#6a6a6a" strokeWidth={2.500} /><path d="M17 27V18L21 10H36L40 18V27Z" fill="url(#redcar)" stroke="#777" strokeWidth={1.500} /><path d="M21 15L23 11H35L37 15Z" fill="#fff" /><path d="M19 19H38M19 22H38" stroke="#4a0806" strokeWidth={1.800} /></Art>,
  <Art box={L}><path d="M9 28Q8 20 15 16L22 6Q32 2 42 5Q48 12 43 20L36 24Q32 34 22 34Q12 34 9 28Z" fill="url(#redcar)" stroke="#888" strokeWidth={1.500} /><path d="M17 16L23 10L28 18L24 20ZM34 12L40 8L40 14L34 18Z" fill="#fff" /><path d="M11 22L14 24M22 28L25 28" stroke="#fe5" strokeWidth={3} /><circle cx={25} cy={30} r={3.500} fill="#bbb" stroke="#222" strokeWidth={2} /><circle cx={40} cy={20} r={3} fill="#bbb" stroke="#222" strokeWidth={1.500} /></Art>,
];
const GrayCar = () => <g transform="translate(0 12)"><Car f="url(#graycar)" glass="#ddd" /></g>;
const renderTools = [
  <Art box={L}><GrayCar /><path d="M26 8L34 1M30 9L38 0M34 9L42 2M48 0V7L44 5" stroke="#eee" strokeWidth={2} fill="none" /></Art>,
  <Art box={L}><Camera /></Art>,
  <Art box={L}><path d="M25 0H51V22L46 28H25Z" fill="#c9b45e" stroke="#333" strokeWidth={1} /><rect x={29} y={0} width={18} height={10} fill="#ddd" stroke="#222" strokeWidth={1} /><rect x={29} y={15} width={14} height={9} fill="#777" stroke="#222" strokeWidth={1} /><GrayCar /></Art>,
  <Art box={L}><Floor /><circle cx={28} cy={21} r={11} fill="url(#pearl)" stroke="#111" strokeWidth={2} /></Art>,
  <Art box={L}><Floor /><circle cx={28} cy={21} r={11} fill="url(#pearl)" stroke="#111" strokeWidth={2} /><path d="M8 4Q12 -2 17 2Q20 6 8 17H20" fill="none" stroke="#e6e6e6" strokeWidth={2} /></Art>,
];
const targetTools = [
  <Art box={b5(0)}><ellipse cx={921} cy={60} rx={33} ry={52} fill="none" stroke="#e4e4e4" strokeWidth={2} /><path d="M888 60H902M940 60H954M921 8V28M921 92V112" stroke="#e4e4e4" strokeWidth={2} /><rect x={915} y={51} width={12} height={18} fill="none" stroke="#e8e8e8" strokeWidth={2.200} /></Art>,
  <Art box={b5(1)}><ellipse cx={1030} cy={58} rx={39} ry={62} fill="none" stroke="#e4e4e4" strokeWidth={2} /><path d="M990 56H1006M1054 56H1070M1030 0V18M1030 102V120" stroke="#e4e4e4" strokeWidth={2} /><ellipse cx={1034} cy={50} rx={13} ry={20} fill="#f7e43c" stroke="#111" strokeWidth={2} /><ellipse cx={1022} cy={76} rx={12} ry={19} fill="#f7e43c" stroke="#111" strokeWidth={2} /></Art>,
  <Art box={L}><g><Floor /></g><path d="M28 0V6M28 16V34" stroke="#fff" strokeWidth={3} strokeDasharray="4 1" /><path d="M24 -2H32V7H37L28 15L19 7H24Z" fill="#fff" stroke="#111" strokeWidth={1.500} /><path d="M28 33H46" stroke="#c22820" strokeWidth={3} /><path d="M28 33V42" stroke="#3c9c30" strokeWidth={2} /></Art>,
  <Art box={L}><path d="M18 14Q34 18 50 12Q46 26 36 42Q24 38 12 34Q18 24 18 14Z" fill="url(#blue)" stroke="#777" strokeWidth={2} /><path d="M35 15L26 38M17 25Q30 30 45 27" fill="none" stroke="#3a3a5a" strokeWidth={1.500} /><g transform="translate(2 -3) scale(.62)"><Camera /></g></Art>,
  <Art box={L}><path d="M6 6L28 0L50 4L42 26L28 40L12 28Z" fill="#6c6c6c" stroke="#555" strokeWidth={1.500} /><path d="M6 6L28 0L50 4L28 15Z" fill="#eee" /><path d="M6 6L28 15V40L12 28Z" fill="#bbb" />{[[6, 5], [28, 15], [12, 27], [42, 25], [28, 39]].map(([x, y]) => <circle key={x + y} cx={x} cy={y} r={3.400} fill="#fff" stroke="#333" strokeWidth={1.200} />)}</Art>,
];

const Work = styled.div`height: 1604px; flex: none; margin-top: 6px; display: flex; gap: 6px;`;
const SideCol = styled.div`width: 252px; display: flex; flex-direction: column; gap: 6px; flex: none;`;
const Panel = styled.div<{ $h: number }>`
  height: ${p => p.$h}px; background: #323232; border-radius: 10px 10px 0 0; display: flex; flex-direction: column; flex: none; position: static; overflow: hidden;
`;
const DragHead = styled.div<{ $h: number }>`
  height: ${p => p.$h}px; border-bottom: 2px solid #444; display: flex; justify-content: center; align-items: center; gap: 6px; flex: none; padding-right: 2px;
`;
const Command = styled.div`
  height: 38px; margin: 22px 18px 0; border: 1.5px solid #464646; border-bottom: 2px solid #6a6a6a; background: #3c3c3c; color: #727272;
  font-size: 24.500px; display: flex; align-items: center; padding-left: 5px; flex: none; letter-spacing: 0;
`;
const ToolGrid = styled.div`display: grid; grid-template-columns: repeat(4, 56px); grid-auto-rows: 56.3px; margin: 26px 0 0 8px;`;
const ToolCell = styled.div`width: 56px; height: 56.3px;`;

const Cube = () => <><Out f="#6b83f3" d="M68 520L112 493L166 511V566L118 592L68 578Z" /><path d="M68 520L112 493L166 511L120 534Z" fill="#bcc8fa" /><path d="M120 534L166 511V566L118 592Z" fill="#3c4fc0" /></>;
const toolArt: Record<string, React.ReactNode> = {
  '0,0': <Out f="#fff" w={2.500} d="M92 48V116L108 100L126 134L142 126L126 94H150Z" />,
  '0,1': <><Ring x={285} y={89} rx={11} ry={10} f="#fff" /></>,
  '0,2': <><Ln d="M414 129L443 60L498 113" /><Pts p={[[414, 129], [443, 60], [498, 113]]} /></>,
  '0,3': <><Ln d="M576 56C630 44 664 55 664 92C664 138 610 136 576 128" /><Pts p={[[576, 60], [660, 43], [672, 135], [576, 124]]} /></>,
  '1,0': <><ellipse cx={117} cy={241} rx={56} ry={50} fill="none" stroke="#e6e6e6" strokeWidth={1.800} /><Ln d="M120 238L156 206" c="#999" /><Pts p={[[120, 238], [156, 206]]} /></>,
  '1,1': <><ellipse cx={288} cy={248} rx={59} ry={38} fill="none" stroke="#e6e6e6" strokeWidth={1.800} /><Ln d="M288 211V248H342" c="#999" /><Pts p={[[288, 211], [288, 248], [342, 248]]} /></>,
  '1,2': <><Ln d="M414 200C450 205 480 225 498 242" /><Ln d="M411 200V286L498 242" c="#999" /><Pts p={[[414, 200], [414, 286], [498, 242]]} /></>,
  '1,3': <><Ln d="M572 213H676V273H572Z" /><Pts p={[[672, 216], [576, 270]]} /></>,
  '2,0': <><Ln d="M68 392L92 353H144L168 392L144 430H92Z" /><Ln d="M120 390H162" c="#999" /><Pts p={[[120, 390], [162, 390]]} /></>,
  '2,1': <><Ln d="M240 347H340V432" c="#999" w={1.500} /><Ln d="M240 351C310 347 336 370 336 432" w={3.500} /><Pts p={[[240, 351], [336, 432]]} /></>,
  '2,2': <><Out f="url(#blue)" w={2} d="M432 352H504L474 438L408 411Z" /><Ln d="M466 352L444 426M420 382L490 394" c="#333a66" w={1.500} /><Solid p={[[432, 352], [504, 352], [408, 411], [474, 438]]} /></>,
  '2,3': <><Out f="#fff" d="M572 374L616 343C660 348 682 362 680 410L634 446C636 404 622 384 572 374Z" /><path d="M606 380L646 352C662 358 676 368 678 386L634 412C630 396 624 386 606 380Z" fill="url(#blue)" /></>,
  '3,0': <Cube />,
  '3,1': <><Ring x={267} y={566} rx={42} ry={37} f="url(#ball)" /><Ring x={310} y={526} rx={42} ry={37} f="url(#ball)" /><Ln d="M270 520Q310 532 350 516M306 490Q316 528 308 562M226 564Q260 580 300 574M250 534Q244 570 256 600" c="#333a66" w={1.500} /></>,
  '3,2': <><ellipse cx={455} cy={503} rx={34} ry={14} fill="none" stroke="#777" strokeWidth={5} /><ellipse cx={455} cy={503} rx={34} ry={14} fill="none" stroke="#111" strokeWidth={2.500} /><Out f="url(#blueH)" d="M392 533Q456 560 520 533V590Q456 618 392 590Z" /><ellipse cx={455} cy={576} rx={32} ry={14} fill="none" stroke="#fff" strokeWidth={3.500} /></>,
  '3,3': <><Out f="url(#blue)" d="M560 574Q590 560 620 495Q650 512 690 520Q672 560 640 596Q610 582 560 574Z" /><Ln d="M590 584Q630 550 654 512M666 512Q650 550 606 592M598 530Q640 540 672 546M580 552Q620 570 656 576M620 496Q640 540 640 594" c="#333a66" w={1.300} /></>,
  '4,0': <><Out f="url(#orange)" w={2.500} d="M56 674L72 666L82 674Q90 668 84 660L94 648L104 644L112 650Q124 644 128 654L118 664L134 670L130 684L118 682L110 700L98 708L92 698Q82 700 82 708L66 702L70 690Z" /><Out f="#fff" w={2.500} d="M106 700L118 686Q128 692 136 686Q150 690 144 702L156 712L178 708Q190 718 172 726L176 738Q166 752 156 738L140 748Q132 742 138 732Q122 734 114 724L122 714Z" /></>,
  '4,1': <Out f="url(#fire)" d="M222 757V700L248 648V722L332 650L292 722L352 726L300 742L330 757Z" />,
  '4,2': <><Out f="#fff" w={2} d="M390 696H452V720H390Z" /><Out f="#323232" w={2} d="M478 708L512 734L492 752L462 726Z" /><path d="M450 650H492L456 722L450 716Z" fill="#16247a" stroke="#0b1038" strokeWidth={1.500} /></>,
  '4,3': <><Out f="#fff" w={2} d="M566 706H676V732H566Z" /><path d="M625 660H668L632 734H625Z" fill="#16247a" /></>,
  '5,0': <><path d="M100 850A22 20 0 1 1 140 850A24 22 0 1 1 120 880A24 22 0 1 1 100 850" fill="#000" stroke="#6c6c6c" strokeWidth={9} /><path d="M100 850A22 20 0 1 1 140 850A24 22 0 1 1 120 880A24 22 0 1 1 100 850" fill="#000" stroke="#000" strokeWidth={6} /><circle cx={98} cy={861} r={19} fill="#fff" /><circle cx={141} cy={861} r={19} fill="#16247a" /><circle cx={119} cy={830} r={20} fill="#6b83f3" /></>,
  '5,1': <><Ring x={288} y={828} rx={21} ry={19} f="#6b83f3" /><Ring x={258} y={870} rx={21} ry={19} f="#fff" /><Ring x={318} y={870} rx={21} ry={19} f="#16247a" /></>,
  '5,2': <><Ln d="M393 824C450 808 492 840 484 906" w={4} /><Pts p={[[426, 822], [486, 876]]} /></>,
  '5,3': <><Ln d="M560 826C620 812 662 850 653 906" w={4} /><Ln d="M558 803H606L678 866V908" dash="2 3" /><Pts p={[[606, 800], [678, 864]]} /></>,
  '6,0': <Out f="#6b83f3" w={2.500} d="M74 944L161 966V990H152Q148 978 134 976V1040L144 1046L140 1056L98 1048L96 1038L104 1036V968Q88 964 80 974H70Z" />,
  '6,1': <><Out f="url(#gray)" w={2.500} d="M234 1015H275V1047H234Z" /><Out f="url(#blue)" w={2.500} d="M307 949H348V981H307Z" /><Ln d="M276 1012L304 988M286 986H304V1004" w={2.500} /></>,
  '6,2': <><Out f="url(#blue)" d="M404 948H442V982H404ZM478 966H514V998H478ZM476 1024H514V1056H476Z" /><Out f="url(#blue)" d="M452 981H490V1013H452Z" /><Out f="url(#gray)" d="M404 1016H442V1047H404Z" /></>,
  '6,3': <><Out f="url(#grayV)" w={2.500} d="M561 950H591V1024H561Z" /><Out f="url(#blueH)" w={2.500} d="M666 977L684 994L628 1046L608 1028Z" /><Ln d="M594 960Q630 962 646 980M626 984L648 982L646 962" w={2.500} /></>,
  '7,0': <><g transform="translate(0 606)"><Cube /></g><path d="M106 1160H142L150 1182L120 1200L104 1190Z" fill="#fff" stroke="#111" strokeWidth={2} /></>,
  '7,1': <><Out f="url(#blue)" w={2} d="M222 1188L256 1160H352L328 1188Z" /><path d="M252 1112V1172M288 1112V1172M324 1112V1172" stroke="#fff" strokeWidth={3.800} /><path d="M237 1124L252 1102L267 1124ZM273 1124L288 1102L303 1124ZM309 1124L324 1102L339 1124Z" fill="#fff" /></>,
  '7,2': <><rect x={390} y={1093} width={126} height={112} fill="#6c6c6c" />{[0, 1, 2].map(r => [0, 1, 2].map(c => <rect key={`${r}${c}`} x={400 + c * 42} y={1101 + r * 38} width={22} height={20} fill={c === 0 && r === 2 ? 'url(#gray)' : 'url(#blue)'} stroke="#222" strokeWidth={2} />))}</>,
  '7,3': <><Out f="#eee" w={2} d="M598 1102H650V1122H598ZM612 1138H638V1160H612ZM606 1172H644V1204H606Z" /><rect x={618} y={1091} width={12} height={120} fill="#c2241c" /></>,
  '8,0': <><Out f="#fff" w={2.500} d="M114 1252L144 1262L120 1290ZM70 1278L88 1266L112 1276V1334L88 1340L70 1332Z" /><Out f="url(#blue)" w={2.500} d="M128 1276L150 1268L174 1278C160 1310 160 1330 130 1352L102 1342C124 1320 124 1300 128 1276Z" /></>,
  '8,1': <><circle cx={228} cy={1276} r={14} fill="#1c1c1c" stroke="#6c6c6c" strokeWidth={1.500} /><circle cx={312} cy={1273} r={14} fill="#1c1c1c" stroke="#6c6c6c" strokeWidth={1.500} /><Ln d="M218 1296H256M230 1300L232 1322H262L256 1362M284 1298L326 1300L340 1324L326 1334L350 1364" c="#6c6c6c" w={8} /><Ln d="M218 1296H256M230 1300L232 1322H262L256 1362M284 1298L326 1300L340 1324L326 1334L350 1364" c="#1c1c1c" w={5.500} /><Out f="url(#blueH)" w={2.500} d="M262 1247H278V1359H262Z" /></>,
  '8,2': <path d="M398 1316L412 1304L424 1330Q460 1278 514 1252Q468 1296 428 1354L412 1344Z" fill="#ececec" />,
  '8,3': <><Out f="#eee" w={2.500} d="M566 1282L596 1262L634 1272V1312L600 1330L566 1320Z" /><path d="M602 1290L634 1272V1312L600 1330Z" fill="#aaa" /><Out f="url(#cone)" w={2.500} d="M652 1270L682 1330Q654 1348 624 1332Z" /></>,
  '9,0': <><Out f="#fff" w={2} d="M106 1430Q118 1404 140 1398L168 1402V1422L146 1424Q130 1420 106 1430Z" /><rect x={170} y={1396} width={16} height={28} /><Out f="#f7dd83" w={2.500} d="M70 1484L118 1442L166 1482L128 1508Z" /><path d="M118 1442L166 1482L128 1508Z" fill="#b99a44" /></>,
};
const noCorner = new Set(['0,0', '4,1', '4,2', '4,3', '5,1', '5,2', '6,2', '6,3']);

const TitleBar = styled.div<{ $h: number }>`
  height: ${p => p.$h}px; border-bottom: 2px solid #444; flex: none; display: flex; align-items: center; justify-content: space-between; padding: 0 4px 4px 10px;
  color: #8e8e8e; font-size: 25px; letter-spacing: -0.1px;
`;
const GearBox = styled.span<{ $mr?: number }>`width: 26px; height: 26px; margin: 4px ${p => p.$mr ?? 0}px 0 0;`;
const Gear = ({ mr }: { mr?: number }) => (
  <GearBox $mr={mr}><Art box="0 0 26 26"><g fill="#c6c6c6">{[0, 45, 90, 135].map(a => <rect key={a} x={10.500} y={1} width={5} height={24} transform={`rotate(${a} 13 13)`} />)}<circle cx={13} cy={13} r={8.500} /></g><circle cx={13} cy={13} r={3.800} fill="#323232" /></Art></GearBox>
);
const TabRow = styled.div`height: 40px; background: #444; display: flex; flex: none;`;
const TabOn = styled.div`width: 72px; background: #323232; border-top-right-radius: 10px;`;
const TabOff = styled.div`flex: 1; height: 40px;`;
const SnapList = styled.div`display: flex; flex-direction: column; padding: 15px 0 0 28px;`;
const SnapRow = styled.div<{ $mt?: number }>`height: 30px; display: flex; align-items: center; gap: 8px; color: #dedede; font-size: 22px; margin-top: ${p => p.$mt ?? 0}px; letter-spacing: 0;`;
const Check = styled.span`width: 24px; height: 24px; border-radius: 5px; background: linear-gradient(#555, #696969); box-shadow: 0 1px 1px #0005; flex: none;`;
const LockCheck = styled(Check)`margin-left: 21px;`;

/* viewport */
const ViewCol = styled.div`width: 756px; display: flex; flex-direction: column; flex: none;`;
const View = styled.div`height: 1552px; background: #fff; position: relative; flex: none;`;
const ViewTag = styled.div`display: flex; gap: 2px; padding: 2px; height: 40px;`;
const ViewName = styled.div`width: 159px; height: 38px; background: #969696; color: #fff; font-size: 23.500px; font-weight: 700; display: flex; align-items: center; justify-content: center; letter-spacing: -0.2px; flex: none;`;
const ViewDrop = styled.div`width: 31px; height: 38px; background: #969696;`;
const Scene = styled.div`position: absolute; left: 8px; top: 348px; width: 740px; height: 620px;`;
const Axes = styled.svg`position: absolute; left: 60px; top: 1400px; width: 100px; height: 100px;`;

const quad = [[84, 898], [1446, 1029], [1062, 1463], [208, 1412]];
const project = (() => {
  const [[x0, y0], [x1, y1], [x2, y2], [x3, y3]] = quad;
  const sx = x0 - x1 + x2 - x3, sy = y0 - y1 + y2 - y3;
  const dx1 = x1 - x2, dx2 = x3 - x2, dy1 = y1 - y2, dy2 = y3 - y2;
  const den = dx1 * dy2 - dx2 * dy1;
  const g = (sx * dy2 - dx2 * sy) / den, h = (dx1 * sy - sx * dy1) / den;
  const a = x1 - x0 + g * x1, b = x3 - x0 + h * x3, d = y1 - y0 + g * y1, e = y3 - y0 + h * y3;
  return (u: number, v: number) => { const w = g * u + h * v + 1; return `${((a * u + b * v + x0) / w).toFixed(1)} ${((d * u + e * v + y0) / w).toFixed(1)}`; };
})();
const mesh = (n: number) => Array.from({ length: n + 1 }, (_, i) => `M${project(i / n, 0)}L${project(i / n, 1)}M${project(0, i / n)}L${project(1, i / n)}`).join('');

const glyphs: [string, number, number, number, number][] = [
  ['A', 763, 934, 60, 114], ['s', 771, 893, 74, 122], ['s', 782, 855, 74, 122], ['e', 795, 816, 74, 122], ['m', 811, 776, 82, 128],
  ['b', 824, 707, 92, 128], ['l', 841, 658, 98, 130], ['y', 844, 634, 102, 132], ['i', 867, 554, 110, 140], ['s', 876, 530, 118, 148],
  ['g', 906, 434, 134, 153], ['o', 923, 366, 138, 160], ['o', 945, 285, 146, 166], ['d', 970, 201, 152, 180], ['.', 992, 108, 160, 190],
];
const bodyL = 'M329 1235C327 1130 332 1060 368 1012C430 935 560 890 640 881L658 884V926L768 963V1240Z';

const Model = () => (
  <Art box="0 0 1568 1568">
    <path d={`M${quad.map(q => q.join(' ')).join('L')}Z`} fill="url(#plane)" />
    <path d={mesh(100)} stroke="#a2a2a2" strokeWidth={.6} fill="none" />
    <path d={mesh(20)} stroke="#5a5a5a" strokeWidth={1.100} fill="none" />
    <path d="M1065 1283L1210 1295" stroke="#58a04c" strokeWidth={2} />
    <path d={bodyL} fill="url(#domeL)" />
    <path d={bodyL} fill="url(#glow)" />
    <path d="M768 963L824 773C885 785 935 815 972 868C1045 965 1088 1110 1080 1240L768 1240Z" fill="url(#domeR)" />
    <path d="M768 963V1075" stroke="#2c6a1c" strokeWidth={1} />
    <ellipse cx={705} cy={1231.500} rx={376} ry={161.500} fill="#20431a" stroke="#3c8a28" strokeWidth={1} />
    <ellipse cx={706} cy={1245} rx={267} ry={116} fill="url(#hole)" stroke="#3c8a28" strokeWidth={1} />
    <path d="M508 1168Q552 1141 612 1135L718 1131L700 1180L598 1192Q560 1188 508 1168Z" fill="#fff" />
    <path d="M530 1158L606 1166M540 1172L600 1180M560 1150L610 1156" stroke="#999" strokeWidth={.8} strokeDasharray="3 1" />
    <path d="M708 1168Q780 1170 845 1152Q790 1132 720 1130Z" fill="#357a22" /><path d="M708 1168Q780 1170 845 1152" stroke="#2a611a" strokeWidth={1} fill="none" />
    <path d="M612 1137L718 1133L680 1274L596 1232Z" fill="#5e5e5e" /><path d="M718 1133L680 1274M612 1137L596 1232" stroke="#eee" strokeWidth={1.500} />
    <path d="M893 91L1000 138L822 717L712 673Z" fill="#afafaf" /><path d="M893 91L712 673M890 103L990 143" stroke="#888" strokeWidth={1} />
    <path d="M712 673L822 717L808 795L693 752Z" fill="url(#bend)" /><path d="M712 673L822 717M693 752L808 795" stroke="#ccc" strokeWidth={1} />
    <path d="M693 752L808 795L820 790L770 963L656 926Z" fill="#565656" /><path d="M824 773L770 963M693 752L656 926" stroke="#fff" strokeWidth={1.800} />
    <g fill="#000" fontFamily="Liberation Sans, sans-serif" stroke="#000" strokeWidth={.4}>
      {glyphs.map(([ch, x, y, w, s], i) => <text key={i} fontSize={100} transform={`matrix(${(w * .0022).toFixed(3)} ${-w / 100} ${-s / 100} ${(-s * .0015).toFixed(3)} ${x} ${y})`}>{ch}</text>)}
    </g>
    <path d="M640 1078L578 1385Q640 1394 695 1391Q735 1375 745 1345L829 1132Q828 1082 790 1074M660 1066H698M738 1066L775 1069" fill="none" stroke="#a01414" strokeWidth={1.800} strokeDasharray="9 6" />
    <path d="M744 1135L743 1258" stroke="#d8402a" strokeWidth={1.500} /><ellipse cx={742} cy={1262} rx={7} ry={9} fill="#8c0c0c" />
  </Art>
);

const ViewTabs = styled.div`height: 52px; background: #414141; display: flex; align-items: center; color: #9c9c9c; font-size: 24.500px; padding: 0 0 8px 19px; letter-spacing: 0.1px; white-space: nowrap;`;
const LayoutIcon = styled.span<{ $ml?: number }>`width: 32px; height: 30px; margin-left: ${p => p.$ml ?? 0}px; flex: none;`;
const TabText = styled.span<{ $w: number; $on?: boolean }>`width: ${p => p.$w}px; text-align: center; color: ${p => (p.$on ? '#aa5cb4' : 'inherit')}; flex: none;`;
const TabBar = styled.span<{ $ml?: number }>`width: 2px; height: 28px; margin-left: ${p => p.$ml ?? 0}px; background: #8a8a8a; flex: none;`;

/* right column */
const RightCol = styled.div`flex: 1; display: flex; flex-direction: column; gap: 6px; min-width: 0;`;
const PropPanel = styled(Panel)`border-radius: 10px 0 0 0;`;
const PropHead = styled.div`height: 30px; border-bottom: 2px solid #444; display: flex; align-items: center; flex: none; padding-right: 3px;`;
const HeadDots = styled.div`flex: 1; display: flex; gap: 6px; justify-content: center; padding-left: 31px; padding-bottom: 2px;`;
const PropBody = styled.div`flex: 1; display: flex; min-height: 0;`;
const PropMain = styled.div`width: 540px; display: flex; flex-direction: column; padding: 4px 24px 0 16px; flex: none;`;
const SideTabs = styled.div`flex: 1; display: flex; flex-direction: column;`;
const SideOn = styled.div`height: 72px; display: flex; justify-content: center; align-items: center; padding-left: 4px;`;
const SideRest = styled.div`flex: 1; background: #444; border-top-left-radius: 10px; display: flex; flex-direction: column; align-items: center; padding: 20px 0 0 2px; gap: 39px;`;
const SideIcon = styled.span`width: 32px; height: 32px; flex: none;`;
const ObjIcons = styled.div`height: 50px; display: flex; gap: 12px; margin-left: 160px; flex: none;`;
const ObjIcon = styled.div<{ $dark?: boolean }>`width: 48px; height: 48px; background: ${p => (p.$dark ? '#202020' : 'transparent')};`;
const Section = styled.div<{ $h: number; $dy?: number; $up?: number }>`height: ${p => p.$h}px; font-size: 22.500px; color: #dedede; display: flex; align-items: center; padding: ${p => p.$dy ?? 0}px 0 ${p => p.$up ?? 0}px 4px; flex: none;`;
const Rule = styled.div`height: 2px; background: #4c4c4c; margin-top: 36px; flex: none;`;
const Row = styled.div<{ $mb: number; $h?: number }>`height: ${p => p.$h ?? 32}px; margin-bottom: ${p => p.$mb}px; display: flex; align-items: center; flex: none; justify-content: flex-start;`;
const RowLabel = styled.div<{ $dy?: number }>`width: 253px; text-align: right; color: #dedede; font-size: 22px; line-height: 28px; margin-top: ${p => p.$dy ?? -3.500}px; flex: none;`;
const Field = styled.div<{ $w: number; $dim?: boolean }>`
  width: ${p => p.$w}px; height: 32px; margin-left: 23px; background: ${p => (p.$dim ? '#363636' : '#3c3c3c')}; color: ${p => (p.$dim ? '#666' : '#e2e2e2')};
  border: 1px solid #484848; border-bottom: 2px solid ${p => (p.$dim ? '#484848' : '#6e6e6e')}; font-size: 22px; display: flex; align-items: center; padding-left: 5.500px; flex: none;
`;
const Stepper = styled.div<{ $dim?: boolean }>`
  width: 22px; height: 32px; margin-left: 8px; border-radius: 7px; background: ${p => (p.$dim ? '#4a4a4a' : '#666')}; color: ${p => (p.$dim ? '#7c7c7c' : '#eee')}; flex: none;
`;
const Popup = styled.div`
  width: 226px; height: 32px; margin-left: 21px; border-radius: 7px; background: #666; box-shadow: inset 0 1px 0 #7d7d7d, 0 1px 1px #0006; color: #eee; font-size: 22px;
  display: flex; align-items: center; justify-content: space-between; padding: 0 8px 0 12px; flex: none;
`;
const PopArrow = styled.span`width: 16px; height: 20px;`;
const Step = ({ dim }: { dim?: boolean }) => (
  <Stepper $dim={dim}><Art box="0 0 22 32"><path d="M6 10.500L11 6.500L16 10.500M6 22L11 26L16 22" fill="none" stroke="currentColor" strokeWidth={2.500} strokeLinecap="round" /><path d="M0 16.500H22" stroke="#323232" strokeWidth={1} opacity=".6" /></Art></Stepper>
);
const UpDown = () => <PopArrow><Art box="0 0 16 20"><path d="M4 7L8 3L12 7M4 13L8 17L12 13" fill="none" stroke="#eee" strokeWidth={2.400} strokeLinecap="round" /></Art></PopArrow>;

const LayerBar = styled.div`height: 72px; display: flex; padding: 16px 0 0 17px; flex: none;`;
const LayerIcon = styled.div`width: 43.950px; height: 44px; flex: none;`;
const Search = styled.div`
  height: 40px; margin: 0 14px 12px 18px; border: 1.500px solid #505050; border-bottom-color: #6a6a6a; border-radius: 10px; background: #3c3c3c; color: #747474; font-size: 25px;
  display: flex; align-items: center; padding: 1px 0 0 11px; gap: 14px; flex: none; letter-spacing: 0.1px;
`;
const SearchIcon = styled.span<{ $w?: number }>`width: ${p => p.$w ?? 28}px; height: 28px;`;
const Table = styled.div`height: 614px; margin: 0 12px 0 16px; background: #1e1e1e; overflow: hidden; flex: none;`;
const Tr = styled.div<{ $head?: boolean }>`
  height: ${p => (p.$head ? 56 : 58)}px; display: flex; align-items: center; color: ${p => (p.$head ? '#f4f4f4' : '#dedede')}; font-size: 22px; font-weight: ${p => (p.$head ? 500 : 700)};
  border-bottom: ${p => (p.$head ? '2px solid #363636' : 'none')}; width: 700px; letter-spacing: -0.3px; padding-top: ${p => (p.$head ? 1 : 0)}px;
`;
const Td = styled.div<{ $w: number; $pl?: number; $line?: boolean }>`
  width: ${p => p.$w}px; height: 32px; line-height: 32px; padding-left: ${p => p.$pl ?? 0}px; border-left: 2px solid ${p => (p.$line ? '#424242' : 'transparent')}; flex: none; display: flex; align-items: center;
`;
const Swatch = styled.span`width: 26px; height: 26px; background: #000; border: 2px solid #e8e8e8; flex: none;`;
const Circle = styled.span`width: 32px; height: 32px; border: 2px solid #7c7c7c; border-radius: 50%; flex: none;`;

const lb = (i: number) => `${84 + 116.700 * i} 204 116.700 132`;
const layerIcons = [
  <><path d="M106 234L172 246V270L160 310L130 306Z" fill="#f4f4ff" stroke="#111" strokeWidth={2} /><path d="M106 234L172 246V268L128 266Z" fill="#e8744a" stroke="#222" strokeWidth={1} /><path d="M110 240L134 304" stroke="#2a4ad0" strokeWidth={2} /><path d="M154 262V316M132 289H178" stroke="#fff" strokeWidth={9} /><path d="M154 272V306M140 289H169" stroke="#000" strokeWidth={4} /></>,
  <><path d="M220 232L258 242V260L244 274L222 262ZM250 264L290 270V292L272 308L252 296Z" fill="#606060" stroke="#8a8a8a" strokeWidth={1.500} /><path d="M224 280V304H240M236 296L248 304L236 312" fill="none" stroke="#8a8a8a" strokeWidth={1.800} /></>,
  <><path d="M338 232L406 310M406 232L338 310" stroke="#9a9a9a" strokeWidth={5} /><path d="M340 234L404 308M404 234L340 308" stroke="#505050" strokeWidth={2} /></>,
  <><path d="M468 300C444 286 448 232 476 230Q494 230 500 244M488 242L502 248L506 232" fill="none" stroke="#8a8a8a" strokeWidth={2} /><path d="M470 250L524 262V294L500 310L476 300Z" fill="#606060" stroke="#8a8a8a" strokeWidth={2} /></>,
  <path d="M605 240L640 286H571Z" fill="#5a5a5a" stroke="#9a9a9a" strokeWidth={2.200} strokeLinejoin="round" />,
  <path d="M688 248H757L723 295Z" fill="#5a5a5a" stroke="#9a9a9a" strokeWidth={2.200} strokeLinejoin="round" />,
  <path d="M859 231V309L816 270Z" fill="#5a5a5a" stroke="#9a9a9a" strokeWidth={2.200} strokeLinejoin="round" />,
  <><path d="M925 230H989L964 270V312H950V270Z" fill="#4a6ae4" stroke="#14286c" strokeWidth={2} /><path d="M932 232H982L960 266V300H956V266Z" fill="#a8bcff" /></>,
  <><rect x={1044} y={230} width={58} height={10} fill="#555" />{[0, 1, 2].map(r => [0, 1, 2].map(c => <rect key={`${r}${c}`} x={1044 + c * 20.500} y={243 + r * 24.500} width={17.500} height={21} fill="#ececec" />))}</>,
  <path d="M1162 240H1220M1162 270H1220M1162 300H1220" stroke="#ececec" strokeWidth={4.500} strokeLinecap="round" />,
  <><ellipse cx={1307} cy={270} rx={38} ry={43} fill="#2f49c8" stroke="#8a9ae0" strokeWidth={1} /><text x={1307} y={297} fontSize={80} fontWeight={700} fill="#fff" textAnchor="middle" fontFamily="Liberation Serif, serif">?</text></>,
];

const Status = styled.div`
  flex: 1; margin-top: 6px; background: #323232; border-top-left-radius: 10px; display: flex; align-items: flex-start; overflow: hidden; height: 22px;
`;
const StatusDots = styled.div`width: 42px; height: 22px; border-right: 2px solid #444; display: flex; flex-direction: column; align-items: center; gap: 5px; padding-top: 6px; flex: none; overflow: hidden; padding-right: 3px;`;
const StatusText = styled.div`font-size: 22.500px; line-height: 27px; color: #c0c0c0; padding-left: 9px; white-space: nowrap;`;

const snaps = ['End', 'Near', 'Point', 'Mid', 'Cen', 'Int', 'Perp', 'Tan', 'Quad', 'Knot', 'Vertex', 'Project'];
const Dots4 = () => <><Dot /><Dot /><Dot /><Dot /></>;

export default function App() {
  return (
    <Screen>
      <Global /><Defs />
      <Grasshopper />
      <Gap><GapHandle /></Gap>
      <Rhino>
        <TopBar>
          <DragCol><Dot /><Dot /></DragCol>
          {viewTools.map((t, i) => <TopCell key={i}>{t}</TopCell>)}
          <TopSep $l={6} $r={4} />
          {carTools.map((t, i) => <TopCell key={i}>{t}</TopCell>)}
          <TopSep $l={4} $r={1} />
          {renderTools.map((t, i) => <TopCell key={i}>{t}</TopCell>)}
          <TopSep $l={6} $r={4} />
          {targetTools.map((t, i) => <TopCell key={i}>{t}</TopCell>)}
          <TopSep $l={4} $r={0} />
          <More><Art box="0 0 40 46"><path d="M12 15L18 20L12 25M20 15L26 20L20 25" fill="none" stroke="#e0e0e0" strokeWidth={1.800} /></Art></More>
        </TopBar>
        <Work>
          <SideCol>
            <Panel $h={802}>
              <DragHead $h={28}><Dots4 /></DragHead>
              <Command>Command</Command>
              <ToolGrid>
                {Array.from({ length: 37 }, (_, i) => {
                  const r = Math.floor(i / 4), c = i % 4, k = `${r},${c}`;
                  return (
                    <ToolCell key={k}>
                      <Art box={`${36 + 168 * c} ${16 + 152 * r} 168 152`}>
                        {toolArt[k]}
                        {!noCorner.has(k) && <path d={`M${203 + 168 * c} ${135 + 152 * r}v32h-38z`} fill="#b4b4b4" />}
                      </Art>
                    </ToolCell>
                  );
                })}
              </ToolGrid>
            </Panel>
            <Panel $h={796}>
              <TitleBar $h={42}>OSnap<Gear mr={3} /></TitleBar>
              <TabRow>
                <TabOn><Art box="0 0 72 40"><circle cx={34} cy={20} r={13.500} fill="none" stroke="#262626" strokeWidth={1.500} /><path d="M34 20.500H52" stroke="#1c1c1c" strokeWidth={1.500} /><rect x={31.500} y={17} width={6} height={6} fill="#fff" stroke="#000" strokeWidth={2} /></Art></TabOn>
                <TabOff><Art box="72 0 180 40"><path d="M98 11H117Q114 19 110 20V31L105 30V20Q99 17 98 11Z" fill="url(#cone)" stroke="#222" strokeWidth={1.500} /><path d="M118 7H122V11M95 28V33H99" fill="none" stroke="#222" strokeWidth={2} /></Art></TabOff>
              </TabRow>
              <SnapList>
                {snaps.map(s => <SnapRow key={s}><Check />{s}</SnapRow>)}
                <SnapRow $mt={34}><Check />Disable</SnapRow>
              </SnapList>
            </Panel>
          </SideCol>
          <ViewCol>
            <View>
              <ViewTag><ViewName>Perspective</ViewName><ViewDrop><Art box="0 0 31 38"><path d="M7 16H23L15 24Z" fill="#fff" /></Art></ViewDrop></ViewTag>
              <Scene><Model /></Scene>
              <Axes viewBox="0 0 100 100">
                <path d="M12.500 27V81L70 84M12.500 80L23 53" fill="none" stroke="#555" strokeWidth={1.200} />
                <g fontSize={25} fill="#555" fontFamily={ui}><text x={17} y={28}>z</text><text x={27} y={54}>x</text><text x={75} y={83}>y</text></g>
              </Axes>
            </View>
            <ViewTabs>
              <LayoutIcon><Art box="0 0 32 30"><path d="M1 2H31V28H1ZM16 2V28M1 15H31M3 5H7M18 5H22M3 17H7M18 17H22" fill="none" stroke="#8c8c8c" strokeWidth={1.500} /></Art></LayoutIcon>
              <LayoutIcon $ml={32}><Art box="0 0 32 30"><path d="M1 2H31V28H1ZM2 5H7" fill="none" stroke="#8c4c96" strokeWidth={1.500} /></Art></LayoutIcon>
              <TabBar $ml={26} /><TabText $w={220} $on>Perspective</TabText>
              <TabBar /><TabText $w={123}>Top</TabText>
              <TabBar /><TabText $w={141}>Front</TabText>
              <TabBar /><TabText $w={141}>Right</TabText>
            </ViewTabs>
          </ViewCol>
          <RightCol>
            <PropPanel $h={802}>
              <PropHead><HeadDots><Dots4 /></HeadDots><Gear /></PropHead>
              <PropBody>
                <PropMain>
                  <ObjIcons>
                    <ObjIcon $dark><Art box="1 -3 52 48"><Camera /></Art></ObjIcon>
                    <ObjIcon><Art box="0 0 48 48"><rect x={1} y={3} width={46} height={42} fill="url(#gray)" stroke="#1c1c1c" strokeWidth={2} /><rect x={5} y={9} width={38} height={30} fill="#fff" stroke="#62b4ea" strokeWidth={2.500} /><rect x={9} y={13} width={30} height={22} fill="#fff" stroke="#d22c1e" strokeWidth={2.500} /></Art></ObjIcon>
                    <ObjIcon><Art box="0 0 48 48"><Ring x={38} y={9} rx={6} ry={6} f="url(#navy)" /><Ring x={29} y={19} rx={8.500} ry={8.500} f="url(#navy)" /><Ring x={15} y={32} rx={11.500} ry={11.500} f="url(#navy)" /></Art></ObjIcon>
                  </ObjIcons>
                  <Section $h={78} $dy={9}>Viewport</Section>
                  <Row $mb={22}><RowLabel>Title</RowLabel><Field $w={222}>Perspective</Field></Row>
                  <Row $mb={22}><RowLabel>Width</RowLabel><Field $w={194} $dim>756</Field><Step dim /></Row>
                  <Row $mb={18}><RowLabel>Height</RowLabel><Field $w={194} $dim>1552</Field><Step dim /></Row>
                  <Row $mb={16}><RowLabel $dy={0}>Projection</RowLabel><Popup>Perspective<UpDown /></Popup></Row>
                  <Row $mb={18}><RowLabel $dy={0}>Display mode</RowLabel><Popup>Wireframe<UpDown /></Popup></Row>
                  <Row $mb={0} $h={24}><RowLabel $dy={0}>Locked</RowLabel><LockCheck /></Row>
                  <Rule />
                  <Section $h={66} $up={3}>Camera</Section>
                  {[['Lens Length (mm)', '30.0'], ['Rotation', '0.0'], ['X Location', '246.756'], ['Y Location', '-32.386'], ['Z Location', '-94.724']].map(([k, v]) => (
                    <Row key={k} $mb={22}><RowLabel>{k}</RowLabel><Field $w={194}>{v}</Field><Step /></Row>
                  ))}
                </PropMain>
                <SideTabs>
                  <SideOn><SideIcon><Art box="0 0 32 32">{['#f33', '#f90', '#ee2', '#6e4', '#3e8', '#3ce', '#36f', '#a3f', '#f3a'].map((c, i) => <circle key={c} cx={16} cy={16} r={9.500} fill="none" stroke={c} strokeWidth={5} strokeDasharray="6.630 60" transform={`rotate(${i * 40 - 90} 16 16)`} />)}<circle cx={16} cy={16} r={12.500} fill="none" stroke="#000" strokeWidth={1.500} /><circle cx={16} cy={16} r={6.500} fill="none" stroke="#000" strokeWidth={1} /></Art></SideIcon></SideOn>
                  <SideRest>
                    <SideIcon><Art box="0 0 32 32"><rect x={2} y={2} width={28} height={24} fill="url(#lcd)" stroke="#0a0a0a" strokeWidth={3.500} /><path d="M12 28H21V31H12Z" fill="#0a0a0a" /></Art></SideIcon>
                    <SideIcon><Art box="0 0 32 32"><rect x={2} y={2} width={28} height={28} fill="#fff" stroke="#111" strokeWidth={2} /><rect x={3} y={3} width={26} height={3} fill="#6c6cd8" /><path d="M4 27V18Q5 8 16 8Q27 8 28 18V27Z" fill="#4464d4" /><text x={16} y={26} fontSize={20} fontWeight={700} fill="#fff" textAnchor="middle" fontFamily="Liberation Serif, serif">?</text></Art></SideIcon>
                  </SideRest>
                </SideTabs>
              </PropBody>
            </PropPanel>
            <PropPanel $h={796}>
              <TitleBar $h={42}>Layers<Gear /></TitleBar>
              <LayerBar>{layerIcons.map((n, i) => <LayerIcon key={i}><Art box={lb(i)}>{n}</Art></LayerIcon>)}</LayerBar>
              <Search><SearchIcon><Art box="0 0 28 28"><circle cx={12} cy={11} r={9.500} fill="none" stroke="#e8e8e8" strokeWidth={2.200} /><path d="M18.500 18L26 26" stroke="#e8e8e8" strokeWidth={3} /></Art></SearchIcon>Search</Search>
              <Table>
                <Tr $head><Td $w={190} $pl={52}>Layer</Td><Td $w={40} $line /><Td $w={40} $line /><Td $w={40} $line /><Td $w={40} $line /><Td $w={160} $pl={4} $line>Material</Td><Td $w={90} $pl={4} $line>Linetype</Td></Tr>
                <Tr><Td $w={190} $pl={52}>Default</Td><Td $w={128} $pl={4}><SearchIcon $w={34}><Art box="0 0 34 28"><path d="M2 16L6 12L12 18L30 2L33 5L12 26Z" fill="none" stroke="#e8e8e8" strokeWidth={1.800} /></Art></SearchIcon></Td><Swatch /><Td $w={166} $pl={8}><Circle /></Td><Td $w={120} $pl={4}>Continuous</Td></Tr>
              </Table>
            </PropPanel>
          </RightCol>
        </Work>
        <Status>
          <StatusDots><Dot /><Dot /></StatusDots>
          <StatusText>Successfully read file "/Users/preciousaghaeze/Downloads/CellPhoneStand_Simple_2024.gh"</StatusText>
        </Status>
      </Rhino>
    </Screen>
  );
}
